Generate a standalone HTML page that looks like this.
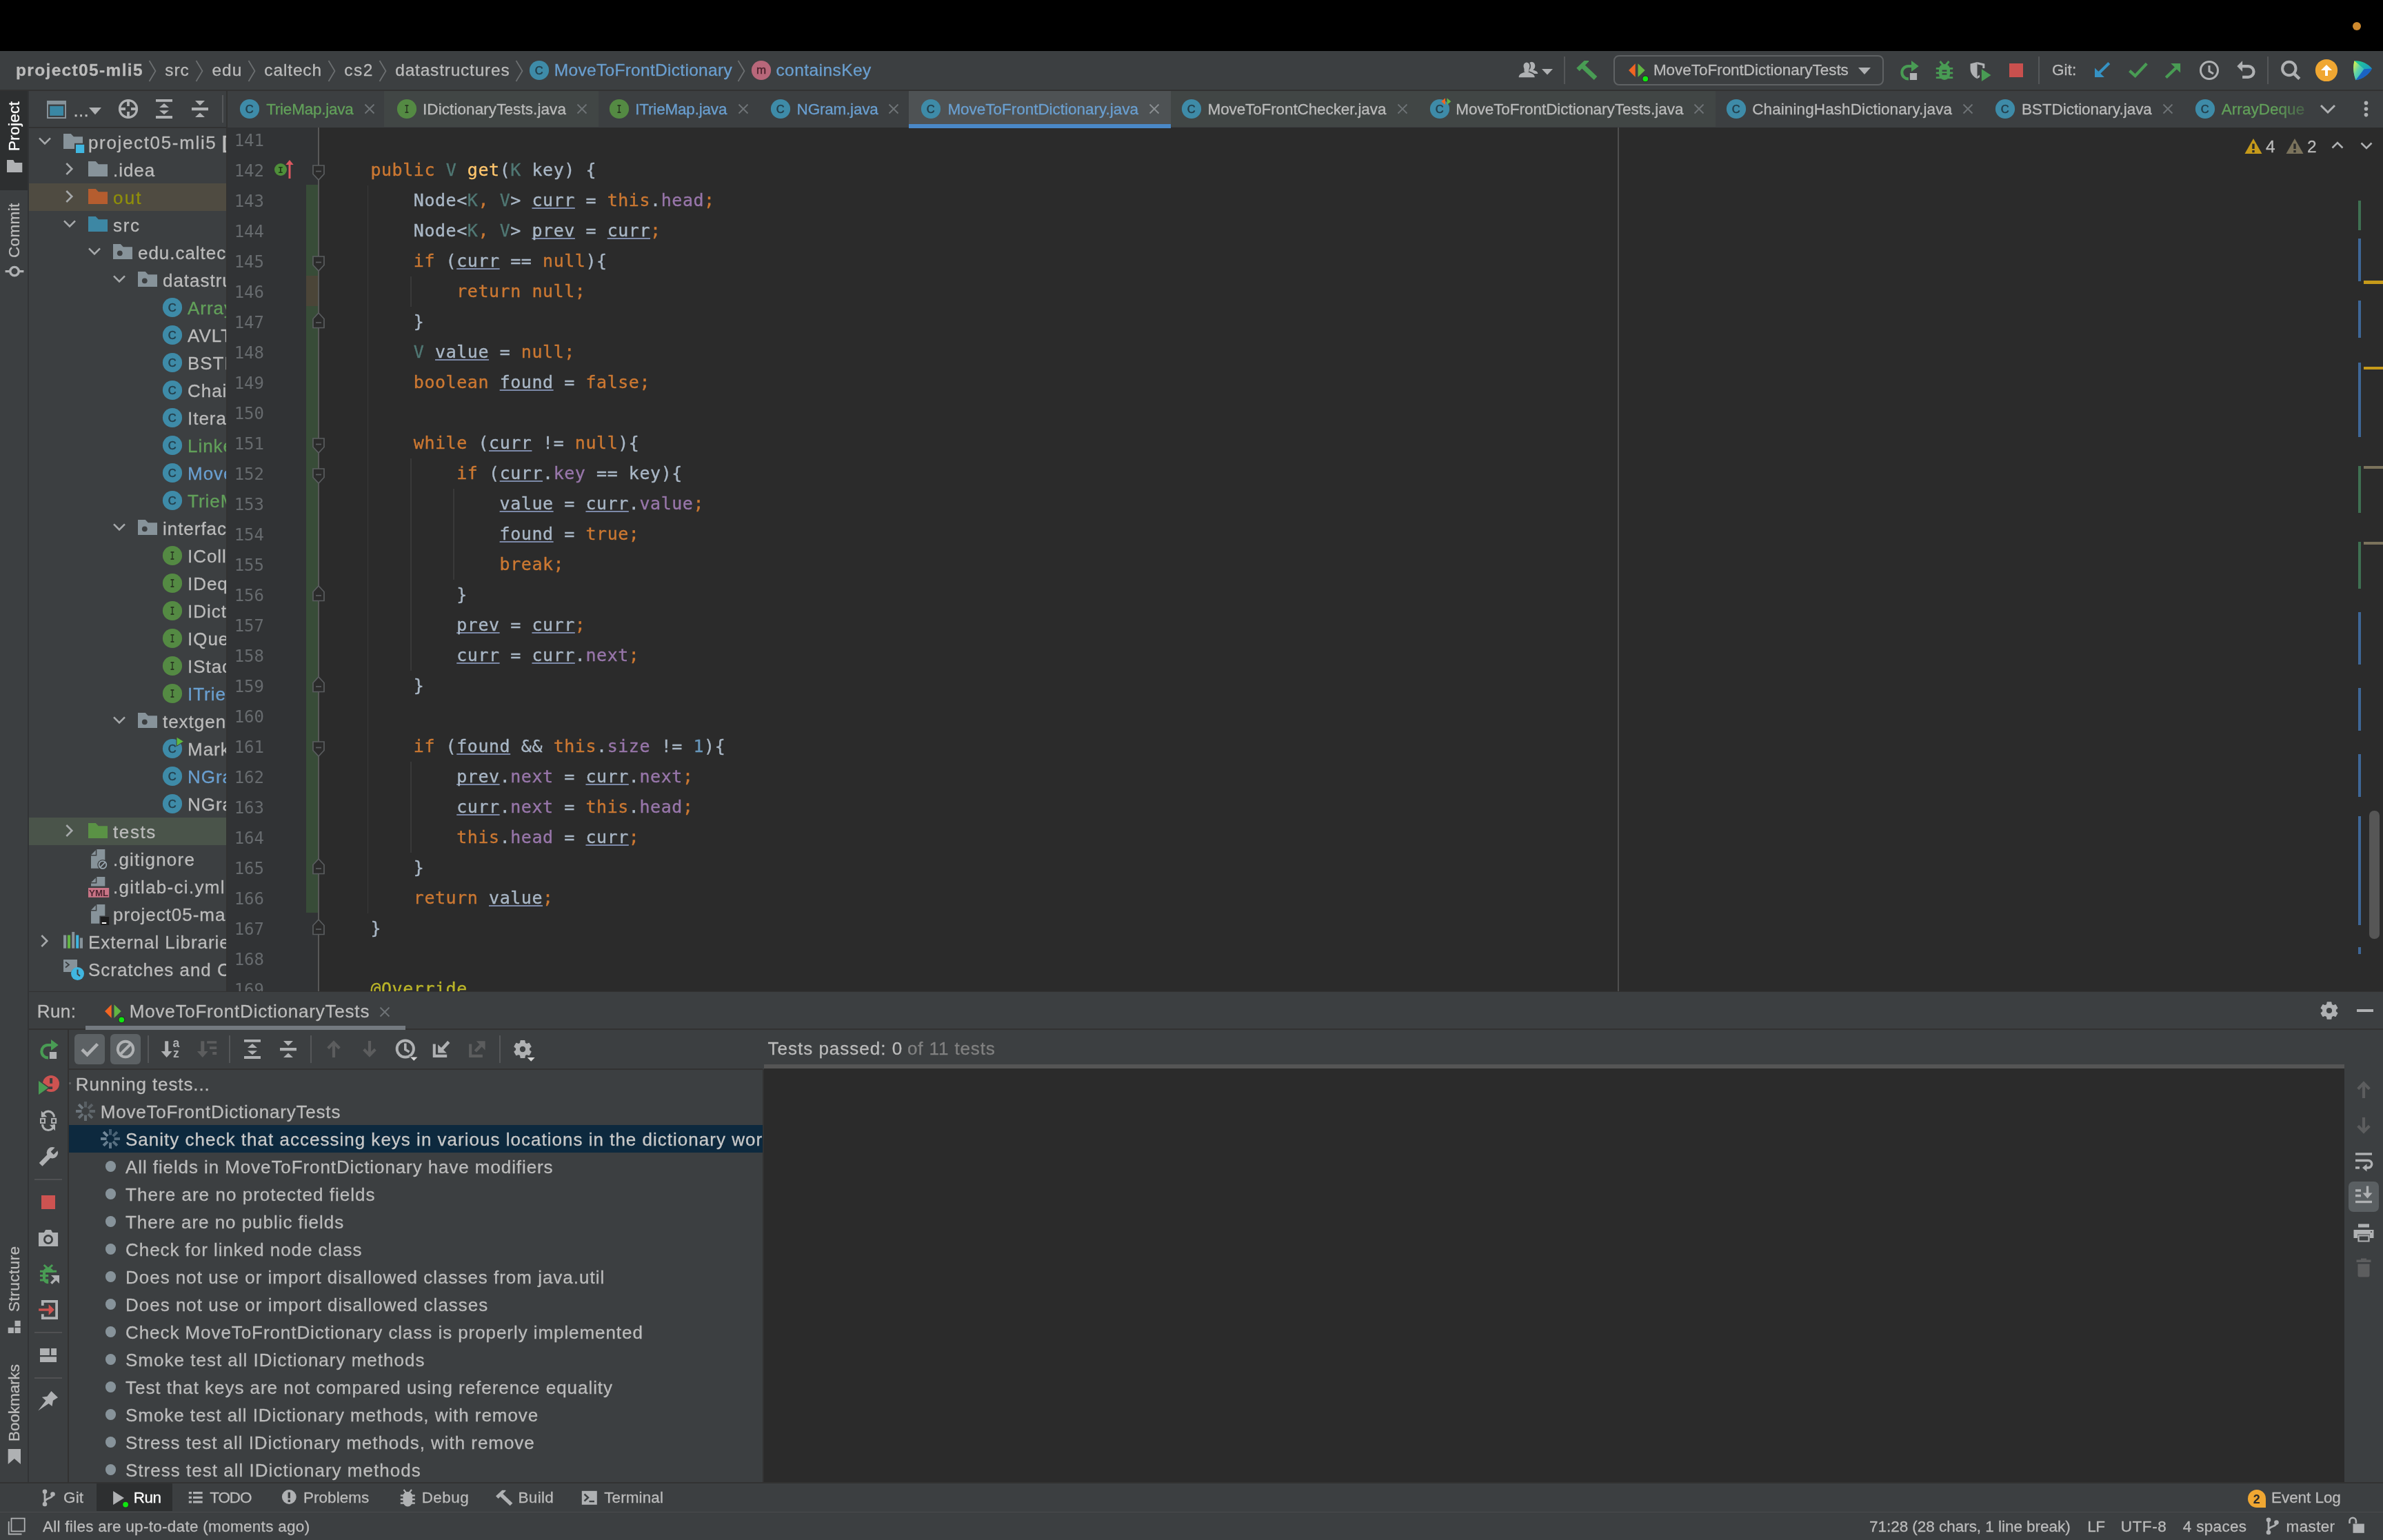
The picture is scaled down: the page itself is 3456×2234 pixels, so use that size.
<!DOCTYPE html>
<html lang="en"><head><meta charset="utf-8"><title>project05-mli5 – MoveToFrontDictionary.java</title>
<style>
html,body{margin:0;padding:0;background:#3c3f41;}
body{will-change:transform;width:3456px;height:2234px;position:relative;overflow:hidden;font-family:"Liberation Sans",sans-serif;font-size:26px;line-height:30px;color:#bbbbbb;}
.a{position:absolute;display:block;}
.t{white-space:nowrap;-webkit-text-stroke:0.3px;}
.clip{overflow:hidden;}
.code{font-family:"DejaVu Sans Mono","Liberation Mono",monospace;font-size:25px;line-height:44px;letter-spacing:0.549px;white-space:pre;color:#a9b7c6;-webkit-text-stroke:0.35px;}
.k{color:#cc7832}.tp{color:#507874}.f{color:#9876aa}.m{color:#ffc66d}.n{color:#6897bb}.an{color:#bbb529}
.u{text-decoration:underline;text-decoration-thickness:1.6px;text-underline-offset:2.3px;text-decoration-color:#7c89a8;text-decoration-skip-ink:none;}
.ln{font-family:"DejaVu Sans Mono","Liberation Mono",monospace;font-size:24px;line-height:46px;color:#676b6e;text-align:right;white-space:pre;}
</style></head>
<body>
<div class="a" style="left:0px;top:0px;width:3456px;height:74px;background:#000000;"></div>
<div class="a" style="left:3412px;top:32px;width:12px;height:12px;background:#cf8a2e;border-radius:50%"></div>
<div class="a" style="left:0px;top:74px;width:3456px;height:56px;background:#3c3f41;"></div>
<div class="a" style="left:0px;top:130px;width:3456px;height:2px;background:#323232;"></div>
<div class="a" style="left:0px;top:132px;width:3456px;height:53px;background:#3c3f41;"></div>
<div class="a" style="left:328px;top:185px;width:3128px;height:1253px;background:#2b2b2b;"></div>
<div class="a" style="left:328px;top:185px;width:135px;height:1253px;background:#313335;"></div>
<div class="a" style="left:0px;top:132px;width:40px;height:2018px;background:#3c3f41;"></div>
<div class="a" style="left:40px;top:132px;width:2px;height:2018px;background:#323436;"></div>
<div class="a" style="left:0px;top:132px;width:40px;height:144px;background:#2d2f30;"></div>
<div class="a" style="left:42px;top:185px;width:286px;height:1253px;background:#3c3f41;"></div>
<div class="a" style="left:42px;top:1438px;width:3414px;height:712px;background:#3c3f41;"></div>
<div class="a" style="left:42px;top:1438px;width:3414px;height:1px;background:#323232;"></div>
<div class="a" style="left:42px;top:1492px;width:3414px;height:2px;background:#323232;"></div>
<div class="a" style="left:0px;top:2150px;width:3456px;height:84px;background:#3c3f41;"></div>
<div class="a" style="left:0px;top:2149.5px;width:3456px;height:2px;background:#323232;"></div>
<div class="a" style="left:0px;top:2192.5px;width:3456px;height:1.5px;background:#4a4c4e;"></div>
<span class="a t" id="t1" style="left:23.0px;top:86.5px;color:#bbbbbb;font-size:24.5px;font-weight:700;letter-spacing:1.345px;">project05-mli5</span>
<svg class="a" style="left:213.5px;top:86px;" width="14" height="34" viewBox="0 0 14 34"><path d="M2.5 2 L11.5 17 L2.5 32" fill="none" stroke="#6c6f71" stroke-width="1.8"/></svg>
<span class="a t" id="t2" style="left:239.3px;top:86.5px;color:#bbbbbb;font-size:24.5px;letter-spacing:0.892px;">src</span>
<svg class="a" style="left:282px;top:86px;" width="14" height="34" viewBox="0 0 14 34"><path d="M2.5 2 L11.5 17 L2.5 32" fill="none" stroke="#6c6f71" stroke-width="1.8"/></svg>
<span class="a t" id="t3" style="left:307.5px;top:86.5px;color:#bbbbbb;font-size:24.5px;letter-spacing:0.992px;">edu</span>
<svg class="a" style="left:358px;top:86px;" width="14" height="34" viewBox="0 0 14 34"><path d="M2.5 2 L11.5 17 L2.5 32" fill="none" stroke="#6c6f71" stroke-width="1.8"/></svg>
<span class="a t" id="t4" style="left:383.3px;top:86.5px;color:#bbbbbb;font-size:24.5px;letter-spacing:0.864px;">caltech</span>
<svg class="a" style="left:474px;top:86px;" width="14" height="34" viewBox="0 0 14 34"><path d="M2.5 2 L11.5 17 L2.5 32" fill="none" stroke="#6c6f71" stroke-width="1.8"/></svg>
<span class="a t" id="t5" style="left:499.3px;top:86.5px;color:#bbbbbb;font-size:24.5px;letter-spacing:1.492px;">cs2</span>
<svg class="a" style="left:547.8px;top:86px;" width="14" height="34" viewBox="0 0 14 34"><path d="M2.5 2 L11.5 17 L2.5 32" fill="none" stroke="#6c6f71" stroke-width="1.8"/></svg>
<span class="a t" id="t6" style="left:573.3px;top:86.5px;color:#bbbbbb;font-size:24.5px;letter-spacing:0.783px;">datastructures</span>
<svg class="a" style="left:745.8px;top:86px;" width="14" height="34" viewBox="0 0 14 34"><path d="M2.5 2 L11.5 17 L2.5 32" fill="none" stroke="#6c6f71" stroke-width="1.8"/></svg>
<svg class="a" style="left:765.6px;top:86px;" width="32" height="32" viewBox="0 0 32 32"><circle cx="16" cy="16" r="14.100" fill="#3e8ba8"/><text x="15.800" y="21.900" text-anchor="middle" font-family="Liberation Sans, sans-serif" font-size="16.500" fill="#24404d" stroke="#24404d" stroke-width="0.500">C</text></svg>
<span class="a t" id="t7" style="left:803.8px;top:86.5px;color:#6a9fd0;font-size:24.5px;letter-spacing:0.299px;">MoveToFrontDictionary</span>
<svg class="a" style="left:1068.3px;top:86px;" width="14" height="34" viewBox="0 0 14 34"><path d="M2.5 2 L11.5 17 L2.5 32" fill="none" stroke="#6c6f71" stroke-width="1.8"/></svg>
<svg class="a" style="left:1087.5px;top:86px;" width="32" height="32" viewBox="0 0 32 32"><circle cx="16" cy="16" r="14.100" fill="#b8677a"/><text x="16" y="21" text-anchor="middle" font-family="Liberation Sans, sans-serif" font-size="17" fill="#4a222c" stroke="#4a222c" stroke-width="0.400">m</text></svg>
<span class="a t" id="t8" style="left:1125.4px;top:86.5px;color:#6a9fd0;font-size:24.5px;letter-spacing:0.448px;">containsKey</span>
<svg class="a" style="left:2200px;top:86px;" width="34" height="32" viewBox="0 0 34 32"><ellipse cx="21.300" cy="9.700" rx="5" ry="6" fill="#afb1b3"/><path d="M18 21 V13 H23.200 L23.400 15.600 C27.500 17 30.300 18 30.300 21z" fill="#afb1b3"/><g stroke="#3c3f41" stroke-width="1.600" fill="#afb1b3"><path d="M1.750 27 C1.750 21 5.500 19.800 11.500 17.600 L11.800 14 H16.200 L16.500 17.600 C22.500 19.800 26.700 21 26.700 27z"/><ellipse cx="14" cy="9.900" rx="5.300" ry="6.200"/></g><path d="M10.500 13 H17.500 V18 H10.500z" fill="#afb1b3"/><rect x="0" y="26.900" width="34" height="3" fill="#3c3f41"/></svg>
<svg class="a" style="left:2236px;top:100px;" width="16" height="9" viewBox="0 0 16 9"><path d="M0 0h16l-8 8.500z" fill="#afb1b3"/></svg>
<div class="a" style="left:2268px;top:82px;width:2px;height:40px;background:#555759;"></div>
<svg class="a" style="left:2284px;top:86px;" width="34" height="32" viewBox="0 0 34 32"><path d="M2.3 12.7 L13.6 2 L20 2 L20 3.300 L6.700 17.300z" fill="#499c54"/><path d="M12 10.500 L30 27.500" stroke="#499c54" stroke-width="6.600" fill="none"/></svg>
<div class="a" style="left:2340px;top:80px;width:388px;height:40px;border:2px solid #5f6264;border-radius:8px;"></div>
<svg class="a" style="left:2362.2px;top:92px;" width="30" height="30" viewBox="0 0 30 30"><path d="M0 10 L9.700 0.300 V19.700z" fill="#f26522"/><path d="M13.500 0.300 L23.700 10 L13.500 19.700z" fill="#62b543"/><circle cx="24.300" cy="22.300" r="5" fill="#2b2b2b"/><circle cx="24.300" cy="22.300" r="3.900" fill="#0fe60f"/></svg>
<span class="a t" id="t9" style="left:2397.9px;top:87.2px;color:#bbbbbb;font-size:22.5px;letter-spacing:-0.035px;">MoveToFrontDictionaryTests</span>
<svg class="a" style="left:2695px;top:98px;" width="18" height="11" viewBox="0 0 18 11"><path d="M0 0h18l-9 10z" fill="#afb1b3"/></svg>
<svg class="a" style="left:2753px;top:85.7px;" width="32" height="32" viewBox="0 0 32 32"><path d="M19.500 10 H14.200 A9.200 9.200 0 1 0 14.900 28.400" fill="none" stroke="#499c54" stroke-width="4.100"/><path d="M19 2.100 V17.900 L29.700 10z" fill="#499c54"/><rect x="16.900" y="20" width="10.200" height="10" fill="#afb1b3"/></svg>
<svg class="a" style="left:2804px;top:86px;" width="32" height="32" viewBox="0 0 32 32"><path d="M9.500 3 L14.500 9 M22.500 3 L17.500 9" stroke="#499c54" stroke-width="3" fill="none"/><path d="M8 14 a8 7 0 0 1 16 0 v7.500 a8 8.500 0 0 1 -16 0z" fill="#499c54"/><path d="M3.800 13.400 H28.200 M3.800 19.900 H28.200 M3.800 26.600 H28.200" stroke="#499c54" stroke-width="2.800"/><path d="M12.600 16.600 H19.400 M12.600 21.400 H19.400" stroke="#3c3f41" stroke-width="2.200"/></svg>
<svg class="a" style="left:2856px;top:86px;" width="34" height="34" viewBox="0 0 34 34"><path d="M1.500 6.500 L11.500 4 V28.300 C5 25 1.500 20 1.500 13z" fill="#afb1b3"/><path d="M11.500 4 L22.300 6.500 V13 h-3 V9 L11.500 7.200z" fill="#afb1b3"/><path d="M11.500 28.300 L15 26 V22.500 L11.500 25z" fill="#afb1b3"/><path d="M17.900 14.200 V32 L31.500 23z" fill="#499c54"/></svg>
<div class="a" style="left:2914px;top:92px;width:20px;height:20px;background:#c9504e;"></div>
<div class="a" style="left:2956px;top:82px;width:2px;height:40px;background:#555759;"></div>
<span class="a t" id="t10" style="left:2976.0px;top:87.2px;color:#bbbbbb;font-size:22.5px;letter-spacing:0.044px;">Git:</span>
<svg class="a" style="left:3036px;top:86px;" width="32" height="32" viewBox="0 0 32 32"><path d="M2 12.500 V26 H15.900z" fill="#3592c4"/><path d="M8 20 L22.800 5.600" stroke="#3592c4" stroke-width="4.200"/></svg>
<svg class="a" style="left:3084px;top:86px;" width="32" height="32" viewBox="0 0 32 32"><path d="M4.500 16.600 L12.600 24 L29.300 6.300" stroke="#499c54" stroke-width="4.200" fill="none"/></svg>
<svg class="a" style="left:3136px;top:86px;" width="32" height="32" viewBox="0 0 32 32"><path d="M12.200 6 H26.100 V19.500z" fill="#499c54"/><path d="M5.300 26.400 L20.400 11.900" stroke="#499c54" stroke-width="4.200"/></svg>
<svg class="a" style="left:3188.1px;top:86px;" width="32" height="32" viewBox="0 0 32 32"><circle cx="16" cy="16" r="12.500" fill="none" stroke="#afb1b3" stroke-width="3"/><path d="M16 9 V17.300 L22 21" fill="none" stroke="#afb1b3" stroke-width="3"/></svg>
<svg class="a" style="left:3242px;top:86px;" width="32" height="32" viewBox="0 0 32 32"><path d="M2.300 10 L10.100 2.200 V17.900z" fill="#afb1b3"/><path d="M10 10.200 H18.700 A7.800 7.800 0 0 1 18.700 25.900 H10.100" fill="none" stroke="#afb1b3" stroke-width="4.200"/></svg>
<div class="a" style="left:3288px;top:82px;width:2px;height:40px;background:#555759;"></div>
<svg class="a" style="left:3304px;top:84px;" width="34" height="34" viewBox="0 0 34 34"><circle cx="15.800" cy="15.500" r="9.700" fill="none" stroke="#afb1b3" stroke-width="4"/><path d="M22.200 22.200 L30.800 30.300" stroke="#afb1b3" stroke-width="4.600"/></svg>
<svg class="a" style="left:3357px;top:85px;" width="34" height="34" viewBox="0 0 34 34"><circle cx="17" cy="17" r="16.100" fill="#f0a732"/><path d="M9 17.100 L17 8.900 L25.100 17.100 H19 V25 H15 V17.100z" fill="#ffffff"/></svg>
<svg class="a" style="left:3410px;top:86px;" width="32" height="32" viewBox="0 0 32 32"><defs><linearGradient id="lg1" x1="0" y1="0" x2="1" y2="1"><stop offset="0" stop-color="#f5f53a"/><stop offset=".45" stop-color="#5fd3a8"/><stop offset="1" stop-color="#1aa6e0"/></linearGradient><linearGradient id="lg2" x1="0" y1="0" x2="1" y2="1"><stop offset="0" stop-color="#21d789"/><stop offset="1" stop-color="#1a7ee0"/></linearGradient></defs><path d="M4.500 2.300 C14 1.500 24 6 30 13.500 C26 22 16 29 6.500 30.200 C2.500 20 2.500 10 4.500 2.300z" fill="url(#lg2)"/><path d="M4.500 2.300 C9 6 15 11 18.500 14.300 C15 19 10 26 6.500 30.200 C2.500 20 2.500 10 4.500 2.300z" fill="url(#lg1)"/><path d="M18.500 14.300 L30 13.500 C26 22 16 29 6.500 30.200 C10 26 15 19 18.500 14.300z" fill="#1a4fc4" opacity=".75"/></svg>
<div class="a" style="left:42px;top:184px;width:286px;height:2px;background:#323232;"></div>
<div class="a" style="left:328px;top:132px;width:2px;height:1306px;background:#323232;"></div>
<svg class="a" style="left:68px;top:146px;" width="28" height="26" viewBox="0 0 28 26"><path d="M0 0h28v26h-28z M2 5.500 v18.500 h24 v-18.500z" fill="#87939a" fill-rule="evenodd"/><rect x="4.200" y="7.900" width="19.800" height="13.900" fill="#3a87a4"/></svg>
<span class="a t" id="t11" style="left:106.5px;top:144.5px;color:#bbbbbb;font-size:26px;letter-spacing:0.250px;">...</span>
<svg class="a" style="left:129px;top:156px;" width="18" height="11" viewBox="0 0 18 11"><path d="M0 0h18l-9 10.200z" fill="#afb1b3"/></svg>
<svg class="a" style="left:170px;top:142px;" width="32" height="32" viewBox="0 0 32 32"><circle cx="16" cy="16" r="12.400" fill="none" stroke="#afb1b3" stroke-width="3.400"/><path d="M16 2.500 V12 M16 20 V29.500 M2.500 16 H12 M20 16 H29.500" stroke="#afb1b3" stroke-width="3.800"/></svg>
<svg class="a" style="left:226px;top:144px;" width="24" height="28" viewBox="0 0 24 28"><path d="M0 0h24v3.800h-24z M0 24h24v3.900h-24z M12 6 L19 12 H5z M5 16.200 H19 L12 22z" fill="#afb1b3"/></svg>
<svg class="a" style="left:278px;top:144px;" width="24" height="28" viewBox="0 0 24 28"><path d="M0 12.100h24v4.100h-24z M5 2 H19 L12 8.900z M12 19.400 L19 26 H5z" fill="#afb1b3"/></svg>
<div class="a" style="left:322px;top:138px;width:2px;height:40px;background:#555759;"></div>
<div class="a" style="left:557px;top:132px;width:311px;height:52px;background:#414645;"></div>
<div class="a" style="left:1318px;top:132px;width:380px;height:53px;background:#4e5254;"></div>
<div class="a" style="left:1318px;top:180px;width:380px;height:6px;background:#4a88c7;"></div>
<div class="a" style="left:1698px;top:132px;width:790px;height:52px;background:#414645;"></div>
<svg class="a" style="left:346px;top:142px;" width="32" height="32" viewBox="0 0 32 32"><circle cx="16" cy="16" r="14.100" fill="#3e8ba8"/><text x="15.800" y="21.900" text-anchor="middle" font-family="Liberation Sans, sans-serif" font-size="16.500" fill="#24404d" stroke="#24404d" stroke-width="0.500">C</text></svg>
<span class="a t" id="t12" style="left:386.2px;top:143.5px;color:#62a05a;font-size:22.5px;letter-spacing:-0.243px;">TrieMap.java</span>
<svg class="a" style="left:527px;top:149px;" width="18" height="18" viewBox="0 0 18 18"><path d="M2.500 2.500 L15.500 15.500 M15.500 2.500 L2.500 15.500" stroke="#6e7376" stroke-width="1.900" fill="none"/></svg>
<svg class="a" style="left:574px;top:142px;" width="32" height="32" viewBox="0 0 32 32"><circle cx="16" cy="16" r="14.100" fill="#548a43"/><text x="16" y="22" text-anchor="middle" font-family="Liberation Mono, monospace" font-weight="bold" font-size="18" fill="#2a3a22" textLength="6.400" lengthAdjust="spacingAndGlyphs">I</text></svg>
<span class="a t" id="t13" style="left:613.0px;top:143.5px;color:#bbbbbb;font-size:22.5px;letter-spacing:0.082px;">IDictionaryTests.java</span>
<svg class="a" style="left:835px;top:149px;" width="18" height="18" viewBox="0 0 18 18"><path d="M2.500 2.500 L15.500 15.500 M15.500 2.500 L2.500 15.500" stroke="#6e7376" stroke-width="1.900" fill="none"/></svg>
<svg class="a" style="left:881.8px;top:142px;" width="32" height="32" viewBox="0 0 32 32"><circle cx="16" cy="16" r="14.100" fill="#548a43"/><text x="16" y="22" text-anchor="middle" font-family="Liberation Mono, monospace" font-weight="bold" font-size="18" fill="#2a3a22" textLength="6.400" lengthAdjust="spacingAndGlyphs">I</text></svg>
<span class="a t" id="t14" style="left:921.3px;top:143.5px;color:#6a9fd0;font-size:22.5px;letter-spacing:-0.197px;">ITrieMap.java</span>
<svg class="a" style="left:1068.7px;top:149px;" width="18" height="18" viewBox="0 0 18 18"><path d="M2.500 2.500 L15.500 15.500 M15.500 2.500 L2.500 15.500" stroke="#6e7376" stroke-width="1.900" fill="none"/></svg>
<svg class="a" style="left:1116px;top:142px;" width="32" height="32" viewBox="0 0 32 32"><circle cx="16" cy="16" r="14.100" fill="#3e8ba8"/><text x="15.800" y="21.900" text-anchor="middle" font-family="Liberation Sans, sans-serif" font-size="16.500" fill="#24404d" stroke="#24404d" stroke-width="0.500">C</text></svg>
<span class="a t" id="t15" style="left:1155.6px;top:143.5px;color:#6a9fd0;font-size:22.5px;letter-spacing:-0.208px;">NGram.java</span>
<svg class="a" style="left:1286.9px;top:149px;" width="18" height="18" viewBox="0 0 18 18"><path d="M2.500 2.500 L15.500 15.500 M15.500 2.500 L2.500 15.500" stroke="#6e7376" stroke-width="1.900" fill="none"/></svg>
<svg class="a" style="left:1333.6px;top:142px;" width="32" height="32" viewBox="0 0 32 32"><circle cx="16" cy="16" r="14.100" fill="#3e8ba8"/><text x="15.800" y="21.900" text-anchor="middle" font-family="Liberation Sans, sans-serif" font-size="16.500" fill="#24404d" stroke="#24404d" stroke-width="0.500">C</text></svg>
<span class="a t" id="t16" style="left:1374.4px;top:143.5px;color:#6a9fd0;font-size:22.5px;letter-spacing:-0.027px;">MoveToFrontDictionary.java</span>
<svg class="a" style="left:1665.3px;top:149px;" width="18" height="18" viewBox="0 0 18 18"><path d="M2.500 2.500 L15.500 15.500 M15.500 2.500 L2.500 15.500" stroke="#8a8e91" stroke-width="1.900" fill="none"/></svg>
<svg class="a" style="left:1712px;top:142px;" width="32" height="32" viewBox="0 0 32 32"><circle cx="16" cy="16" r="14.100" fill="#3e8ba8"/><text x="15.800" y="21.900" text-anchor="middle" font-family="Liberation Sans, sans-serif" font-size="16.500" fill="#24404d" stroke="#24404d" stroke-width="0.500">C</text></svg>
<span class="a t" id="t17" style="left:1751.5px;top:143.5px;color:#bbbbbb;font-size:22.5px;letter-spacing:-0.112px;">MoveToFrontChecker.java</span>
<svg class="a" style="left:2024.8px;top:149px;" width="18" height="18" viewBox="0 0 18 18"><path d="M2.500 2.500 L15.500 15.500 M15.500 2.500 L2.500 15.500" stroke="#6e7376" stroke-width="1.900" fill="none"/></svg>
<svg class="a" style="left:2071.5px;top:142px;" width="32" height="32" viewBox="0 0 32 32"><circle cx="16" cy="16" r="14.100" fill="#3e8ba8"/><text x="15.800" y="21.900" text-anchor="middle" font-family="Liberation Sans, sans-serif" font-size="16.500" fill="#24404d" stroke="#24404d" stroke-width="0.500">C</text></svg>
<svg class="a" style="left:2090px;top:140px;" width="20" height="16" viewBox="0 0 20 16"><path d="M0.300 7.200 L6 2.300 V12z" fill="#f26522"/><path d="M8.500 2.300 L14.400 7.200 L8.500 12z" fill="#62b543"/></svg>
<span class="a t" id="t18" style="left:2111.3px;top:143.5px;color:#bbbbbb;font-size:22.5px;letter-spacing:-0.042px;">MoveToFrontDictionaryTests.java</span>
<svg class="a" style="left:2454.8px;top:149px;" width="18" height="18" viewBox="0 0 18 18"><path d="M2.500 2.500 L15.500 15.500 M15.500 2.500 L2.500 15.500" stroke="#6e7376" stroke-width="1.900" fill="none"/></svg>
<svg class="a" style="left:2502.2px;top:142px;" width="32" height="32" viewBox="0 0 32 32"><circle cx="16" cy="16" r="14.100" fill="#3e8ba8"/><text x="15.800" y="21.900" text-anchor="middle" font-family="Liberation Sans, sans-serif" font-size="16.500" fill="#24404d" stroke="#24404d" stroke-width="0.500">C</text></svg>
<span class="a t" id="t19" style="left:2541.2px;top:143.5px;color:#bbbbbb;font-size:22.5px;letter-spacing:0.101px;">ChainingHashDictionary.java</span>
<svg class="a" style="left:2844.6px;top:149px;" width="18" height="18" viewBox="0 0 18 18"><path d="M2.500 2.500 L15.500 15.500 M15.500 2.500 L2.500 15.500" stroke="#6e7376" stroke-width="1.900" fill="none"/></svg>
<svg class="a" style="left:2891.8px;top:142px;" width="32" height="32" viewBox="0 0 32 32"><circle cx="16" cy="16" r="14.100" fill="#3e8ba8"/><text x="15.800" y="21.900" text-anchor="middle" font-family="Liberation Sans, sans-serif" font-size="16.500" fill="#24404d" stroke="#24404d" stroke-width="0.500">C</text></svg>
<span class="a t" id="t20" style="left:2931.9px;top:143.5px;color:#bbbbbb;font-size:22.5px;letter-spacing:-0.039px;">BSTDictionary.java</span>
<svg class="a" style="left:3134.7px;top:149px;" width="18" height="18" viewBox="0 0 18 18"><path d="M2.500 2.500 L15.500 15.500 M15.500 2.500 L2.500 15.500" stroke="#6e7376" stroke-width="1.900" fill="none"/></svg>
<svg class="a" style="left:3181.7px;top:142px;" width="32" height="32" viewBox="0 0 32 32"><circle cx="16" cy="16" r="14.100" fill="#3e8ba8"/><text x="15.800" y="21.900" text-anchor="middle" font-family="Liberation Sans, sans-serif" font-size="16.500" fill="#24404d" stroke="#24404d" stroke-width="0.500">C</text></svg>
<span class="a t" id="t21" style="left:3221.8px;top:143.5px;color:#62a05a;font-size:22.5px;letter-spacing:0.037px;">ArrayDeque</span>
<div class="a" style="left:3300px;top:134px;width:50px;height:48px;background:linear-gradient(90deg,rgba(60,63,65,0),rgba(60,63,65,.75));"></div>
<svg class="a" style="left:3363px;top:149px;" width="26" height="18" viewBox="0 0 26 18"><path d="M3 4 L13 14 L23 4" fill="none" stroke="#afb1b3" stroke-width="3"/></svg>
<svg class="a" style="left:3426px;top:144px;" width="12" height="30" viewBox="0 0 12 30"><circle cx="5.500" cy="5.400" r="2.800" fill="#afb1b3"/><circle cx="5.500" cy="14" r="2.800" fill="#afb1b3"/><circle cx="5.500" cy="22.600" r="2.800" fill="#afb1b3"/></svg>
<div class="a clip" style="left:42px;top:186px;width:286px;height:1252px;">
<svg class="a" style="left:12px;top:12px;" width="22" height="14" viewBox="0 0 22 14"><path d="M3 2.300 L11 10.300 L19 2.300" fill="none" stroke="#a6a9ab" stroke-width="2.600"/></svg>
<svg class="a" style="left:50px;top:8px;" width="32" height="30" viewBox="0 0 32 30"><path d="M0 0 H10.800 L14.800 4.200 H28 V22 H0z" fill="#87939a"/><rect x="16" y="13.800" width="14.500" height="14.500" fill="#3c3f41"/><rect x="18" y="15.800" width="12.200" height="12.200" fill="#40b6e0"/></svg>
<span class="a t" id="t22" style="left:86.0px;top:6.0px;color:#bbbbbb;font-size:26px;letter-spacing:1.654px;">project05-mli5</span>
<span class="a t" id="t23" style="left:280.2px;top:6.0px;color:#bbbbbb;font-size:26px;font-weight:700;letter-spacing:0.968px;">[project05-main]</span>
<svg class="a" style="left:52px;top:48px;" width="14" height="22" viewBox="0 0 14 22"><path d="M2.300 3 L10.300 11 L2.300 19" fill="none" stroke="#a6a9ab" stroke-width="2.600"/></svg>
<svg class="a" style="left:86px;top:48px;" width="32" height="30" viewBox="0 0 32 30"><path d="M0 0 H10.800 L14.800 4.200 H28 V22 H0z" fill="#87939a"/></svg>
<span class="a t" id="t24" style="left:122.0px;top:46.0px;color:#bbbbbb;font-size:26px;letter-spacing:0.950px;">.idea</span>
<div class="a" style="left:0px;top:80px;width:286px;height:40px;background:#4f4b41;"></div>
<svg class="a" style="left:52px;top:88px;" width="14" height="22" viewBox="0 0 14 22"><path d="M2.300 3 L10.300 11 L2.300 19" fill="none" stroke="#a6a9ab" stroke-width="2.600"/></svg>
<svg class="a" style="left:86px;top:88px;" width="32" height="30" viewBox="0 0 32 30"><path d="M0 0 H10.800 L14.800 4.200 H28 V22 H0z" fill="#b55d2f"/></svg>
<span class="a t" id="t25" style="left:122.0px;top:86.0px;color:#908f0a;font-size:26px;letter-spacing:2.200px;">out</span>
<svg class="a" style="left:48px;top:132px;" width="22" height="14" viewBox="0 0 22 14"><path d="M3 2.300 L11 10.300 L19 2.300" fill="none" stroke="#a6a9ab" stroke-width="2.600"/></svg>
<svg class="a" style="left:86px;top:128px;" width="32" height="30" viewBox="0 0 32 30"><path d="M0 0 H10.800 L14.800 4.200 H28 V22 H0z" fill="#3d87a4"/></svg>
<span class="a t" id="t26" style="left:122.0px;top:126.0px;color:#bbbbbb;font-size:26px;letter-spacing:1.700px;">src</span>
<svg class="a" style="left:84px;top:172px;" width="22" height="14" viewBox="0 0 22 14"><path d="M3 2.300 L11 10.300 L19 2.300" fill="none" stroke="#a6a9ab" stroke-width="2.600"/></svg>
<svg class="a" style="left:122px;top:168px;" width="32" height="30" viewBox="0 0 32 30"><path d="M0 0 H10.800 L14.800 4.200 H28 V22 H0z" fill="#87939a"/><circle cx="9.800" cy="13.300" r="3.900" fill="#3c3f41"/></svg>
<span class="a t" id="t27" style="left:158.0px;top:166.0px;color:#bbbbbb;font-size:26px;letter-spacing:0.968px;">edu.caltech.cs2</span>
<svg class="a" style="left:120px;top:212px;" width="22" height="14" viewBox="0 0 22 14"><path d="M3 2.300 L11 10.300 L19 2.300" fill="none" stroke="#a6a9ab" stroke-width="2.600"/></svg>
<svg class="a" style="left:158px;top:208px;" width="32" height="30" viewBox="0 0 32 30"><path d="M0 0 H10.800 L14.800 4.200 H28 V22 H0z" fill="#87939a"/><circle cx="9.800" cy="13.300" r="3.900" fill="#3c3f41"/></svg>
<span class="a t" id="t28" style="left:194.0px;top:206.0px;color:#bbbbbb;font-size:26px;letter-spacing:0.968px;">datastructures</span>
<svg class="a" style="left:192px;top:244px;" width="32" height="32" viewBox="0 0 32 32"><circle cx="16" cy="16" r="14.100" fill="#3e8ba8"/><text x="15.800" y="21.900" text-anchor="middle" font-family="Liberation Sans, sans-serif" font-size="16.500" fill="#24404d" stroke="#24404d" stroke-width="0.500">C</text></svg>
<span class="a t" id="t29" style="left:230.0px;top:246.0px;color:#62a05a;font-size:26px;letter-spacing:0.968px;">ArrayDeque</span>
<svg class="a" style="left:192px;top:284px;" width="32" height="32" viewBox="0 0 32 32"><circle cx="16" cy="16" r="14.100" fill="#3e8ba8"/><text x="15.800" y="21.900" text-anchor="middle" font-family="Liberation Sans, sans-serif" font-size="16.500" fill="#24404d" stroke="#24404d" stroke-width="0.500">C</text></svg>
<span class="a t" id="t30" style="left:230.0px;top:286.0px;color:#bbbbbb;font-size:26px;letter-spacing:0.968px;">AVLTreeDictionary</span>
<svg class="a" style="left:192px;top:324px;" width="32" height="32" viewBox="0 0 32 32"><circle cx="16" cy="16" r="14.100" fill="#3e8ba8"/><text x="15.800" y="21.900" text-anchor="middle" font-family="Liberation Sans, sans-serif" font-size="16.500" fill="#24404d" stroke="#24404d" stroke-width="0.500">C</text></svg>
<span class="a t" id="t31" style="left:230.0px;top:326.0px;color:#bbbbbb;font-size:26px;letter-spacing:0.968px;">BSTDictionary</span>
<svg class="a" style="left:192px;top:364px;" width="32" height="32" viewBox="0 0 32 32"><circle cx="16" cy="16" r="14.100" fill="#3e8ba8"/><text x="15.800" y="21.900" text-anchor="middle" font-family="Liberation Sans, sans-serif" font-size="16.500" fill="#24404d" stroke="#24404d" stroke-width="0.500">C</text></svg>
<span class="a t" id="t32" style="left:230.0px;top:366.0px;color:#bbbbbb;font-size:26px;letter-spacing:0.968px;">ChainingHashDictionary</span>
<svg class="a" style="left:192px;top:404px;" width="32" height="32" viewBox="0 0 32 32"><circle cx="16" cy="16" r="14.100" fill="#3e8ba8"/><text x="15.800" y="21.900" text-anchor="middle" font-family="Liberation Sans, sans-serif" font-size="16.500" fill="#24404d" stroke="#24404d" stroke-width="0.500">C</text></svg>
<span class="a t" id="t33" style="left:230.0px;top:406.0px;color:#bbbbbb;font-size:26px;letter-spacing:0.968px;">IterableString</span>
<svg class="a" style="left:192px;top:444px;" width="32" height="32" viewBox="0 0 32 32"><circle cx="16" cy="16" r="14.100" fill="#3e8ba8"/><text x="15.800" y="21.900" text-anchor="middle" font-family="Liberation Sans, sans-serif" font-size="16.500" fill="#24404d" stroke="#24404d" stroke-width="0.500">C</text></svg>
<span class="a t" id="t34" style="left:230.0px;top:446.0px;color:#62a05a;font-size:26px;letter-spacing:0.968px;">LinkedDeque</span>
<svg class="a" style="left:192px;top:484px;" width="32" height="32" viewBox="0 0 32 32"><circle cx="16" cy="16" r="14.100" fill="#3e8ba8"/><text x="15.800" y="21.900" text-anchor="middle" font-family="Liberation Sans, sans-serif" font-size="16.500" fill="#24404d" stroke="#24404d" stroke-width="0.500">C</text></svg>
<span class="a t" id="t35" style="left:230.0px;top:486.0px;color:#6a9fd0;font-size:26px;letter-spacing:0.968px;">MoveToFrontDictionary</span>
<svg class="a" style="left:192px;top:524px;" width="32" height="32" viewBox="0 0 32 32"><circle cx="16" cy="16" r="14.100" fill="#3e8ba8"/><text x="15.800" y="21.900" text-anchor="middle" font-family="Liberation Sans, sans-serif" font-size="16.500" fill="#24404d" stroke="#24404d" stroke-width="0.500">C</text></svg>
<span class="a t" id="t36" style="left:230.0px;top:526.0px;color:#62a05a;font-size:26px;letter-spacing:0.968px;">TrieMap</span>
<svg class="a" style="left:120px;top:572px;" width="22" height="14" viewBox="0 0 22 14"><path d="M3 2.300 L11 10.300 L19 2.300" fill="none" stroke="#a6a9ab" stroke-width="2.600"/></svg>
<svg class="a" style="left:158px;top:568px;" width="32" height="30" viewBox="0 0 32 30"><path d="M0 0 H10.800 L14.800 4.200 H28 V22 H0z" fill="#87939a"/><circle cx="9.800" cy="13.300" r="3.900" fill="#3c3f41"/></svg>
<span class="a t" id="t37" style="left:194.0px;top:566.0px;color:#bbbbbb;font-size:26px;letter-spacing:0.968px;">interfaces</span>
<svg class="a" style="left:192px;top:604px;" width="32" height="32" viewBox="0 0 32 32"><circle cx="16" cy="16" r="14.100" fill="#548a43"/><text x="16" y="22" text-anchor="middle" font-family="Liberation Mono, monospace" font-weight="bold" font-size="18" fill="#2a3a22" textLength="6.400" lengthAdjust="spacingAndGlyphs">I</text></svg>
<span class="a t" id="t38" style="left:230.0px;top:606.0px;color:#bbbbbb;font-size:26px;letter-spacing:0.968px;">ICollection</span>
<svg class="a" style="left:192px;top:644px;" width="32" height="32" viewBox="0 0 32 32"><circle cx="16" cy="16" r="14.100" fill="#548a43"/><text x="16" y="22" text-anchor="middle" font-family="Liberation Mono, monospace" font-weight="bold" font-size="18" fill="#2a3a22" textLength="6.400" lengthAdjust="spacingAndGlyphs">I</text></svg>
<span class="a t" id="t39" style="left:230.0px;top:646.0px;color:#bbbbbb;font-size:26px;letter-spacing:0.968px;">IDeque</span>
<svg class="a" style="left:192px;top:684px;" width="32" height="32" viewBox="0 0 32 32"><circle cx="16" cy="16" r="14.100" fill="#548a43"/><text x="16" y="22" text-anchor="middle" font-family="Liberation Mono, monospace" font-weight="bold" font-size="18" fill="#2a3a22" textLength="6.400" lengthAdjust="spacingAndGlyphs">I</text></svg>
<span class="a t" id="t40" style="left:230.0px;top:686.0px;color:#bbbbbb;font-size:26px;letter-spacing:0.968px;">IDictionary</span>
<svg class="a" style="left:192px;top:724px;" width="32" height="32" viewBox="0 0 32 32"><circle cx="16" cy="16" r="14.100" fill="#548a43"/><text x="16" y="22" text-anchor="middle" font-family="Liberation Mono, monospace" font-weight="bold" font-size="18" fill="#2a3a22" textLength="6.400" lengthAdjust="spacingAndGlyphs">I</text></svg>
<span class="a t" id="t41" style="left:230.0px;top:726.0px;color:#bbbbbb;font-size:26px;letter-spacing:0.968px;">IQueue</span>
<svg class="a" style="left:192px;top:764px;" width="32" height="32" viewBox="0 0 32 32"><circle cx="16" cy="16" r="14.100" fill="#548a43"/><text x="16" y="22" text-anchor="middle" font-family="Liberation Mono, monospace" font-weight="bold" font-size="18" fill="#2a3a22" textLength="6.400" lengthAdjust="spacingAndGlyphs">I</text></svg>
<span class="a t" id="t42" style="left:230.0px;top:766.0px;color:#bbbbbb;font-size:26px;letter-spacing:0.968px;">IStack</span>
<svg class="a" style="left:192px;top:804px;" width="32" height="32" viewBox="0 0 32 32"><circle cx="16" cy="16" r="14.100" fill="#548a43"/><text x="16" y="22" text-anchor="middle" font-family="Liberation Mono, monospace" font-weight="bold" font-size="18" fill="#2a3a22" textLength="6.400" lengthAdjust="spacingAndGlyphs">I</text></svg>
<span class="a t" id="t43" style="left:230.0px;top:806.0px;color:#6a9fd0;font-size:26px;letter-spacing:0.968px;">ITrieMap</span>
<svg class="a" style="left:120px;top:852px;" width="22" height="14" viewBox="0 0 22 14"><path d="M3 2.300 L11 10.300 L19 2.300" fill="none" stroke="#a6a9ab" stroke-width="2.600"/></svg>
<svg class="a" style="left:158px;top:848px;" width="32" height="30" viewBox="0 0 32 30"><path d="M0 0 H10.800 L14.800 4.200 H28 V22 H0z" fill="#87939a"/><circle cx="9.800" cy="13.300" r="3.900" fill="#3c3f41"/></svg>
<span class="a t" id="t44" style="left:194.0px;top:846.0px;color:#bbbbbb;font-size:26px;letter-spacing:0.968px;">textgen</span>
<svg class="a" style="left:192px;top:884px;" width="32" height="32" viewBox="0 0 32 32"><circle cx="16" cy="16" r="14.100" fill="#3e8ba8"/><text x="15.800" y="21.900" text-anchor="middle" font-family="Liberation Sans, sans-serif" font-size="16.500" fill="#24404d" stroke="#24404d" stroke-width="0.500">C</text></svg>
<svg class="a" style="left:212px;top:882px;" width="14" height="16" viewBox="0 0 14 16"><path d="M2 1 L12.500 7.500 L2 14.500z" fill="#5fb83f" stroke="#3c3f41" stroke-width="1"/></svg>
<span class="a t" id="t45" style="left:230.0px;top:886.0px;color:#bbbbbb;font-size:26px;letter-spacing:0.968px;">MarkovTextGenerator</span>
<svg class="a" style="left:192px;top:924px;" width="32" height="32" viewBox="0 0 32 32"><circle cx="16" cy="16" r="14.100" fill="#3e8ba8"/><text x="15.800" y="21.900" text-anchor="middle" font-family="Liberation Sans, sans-serif" font-size="16.500" fill="#24404d" stroke="#24404d" stroke-width="0.500">C</text></svg>
<span class="a t" id="t46" style="left:230.0px;top:926.0px;color:#6a9fd0;font-size:26px;letter-spacing:0.968px;">NGram</span>
<svg class="a" style="left:192px;top:964px;" width="32" height="32" viewBox="0 0 32 32"><circle cx="16" cy="16" r="14.100" fill="#3e8ba8"/><text x="15.800" y="21.900" text-anchor="middle" font-family="Liberation Sans, sans-serif" font-size="16.500" fill="#24404d" stroke="#24404d" stroke-width="0.500">C</text></svg>
<span class="a t" id="t47" style="left:230.0px;top:966.0px;color:#bbbbbb;font-size:26px;letter-spacing:0.968px;">NGramMap</span>
<div class="a" style="left:0px;top:1000px;width:286px;height:40px;background:#4a544a;"></div>
<svg class="a" style="left:52px;top:1008px;" width="14" height="22" viewBox="0 0 14 22"><path d="M2.300 3 L10.300 11 L2.300 19" fill="none" stroke="#a6a9ab" stroke-width="2.600"/></svg>
<svg class="a" style="left:86px;top:1008px;" width="32" height="30" viewBox="0 0 32 30"><path d="M0 0 H10.800 L14.800 4.200 H28 V22 H0z" fill="#5a9245"/></svg>
<span class="a t" id="t48" style="left:122.0px;top:1006.0px;color:#bbbbbb;font-size:26px;letter-spacing:1.600px;">tests</span>
<svg class="a" style="left:90px;top:1046px;" width="30" height="32" viewBox="0 0 30 32"><path d="M8.300 0 H20.300 V27.800 H0 V9.500 H8.300z" fill="#87939a"/><path d="M6.800 1.300 V8 H0.200z" fill="#87939a"/><circle cx="16.900" cy="22.500" r="7.600" fill="#3c3f41"/><circle cx="16.900" cy="22.500" r="5.400" fill="none" stroke="#9aa7b0" stroke-width="1.800"/><path d="M13.100 26.300 L20.700 18.700" stroke="#9aa7b0" stroke-width="1.800"/></svg>
<span class="a t" id="t49" style="left:122.0px;top:1046.0px;color:#bbbbbb;font-size:26px;letter-spacing:1.211px;">.gitignore</span>
<svg class="a" style="left:86px;top:1086px;" width="32" height="32" viewBox="0 0 32 32"><path d="M12.300 0.100 H24.300 V13.600 H4 V9.600 H12.300z" fill="#87939a"/><path d="M10.800 1.400 V8.100 H4.200z" fill="#87939a"/><rect x="0" y="16" width="30.200" height="13.800" fill="#c97486"/><text x="15.100" y="28" text-anchor="middle" font-family="Liberation Sans, sans-serif" font-weight="bold" font-size="13" fill="#4a2530" textLength="28" lengthAdjust="spacingAndGlyphs">YML</text></svg>
<span class="a t" id="t50" style="left:122.0px;top:1086.0px;color:#bbbbbb;font-size:26px;letter-spacing:1.308px;">.gitlab-ci.yml</span>
<svg class="a" style="left:90px;top:1126px;" width="30" height="32" viewBox="0 0 30 32"><path d="M8.300 0 H20.300 V27.800 H0 V9.500 H8.300z" fill="#87939a"/><path d="M6.800 1.300 V8 H0.200z" fill="#87939a"/><rect x="12.300" y="16.500" width="15.400" height="15" fill="#3c3f41"/><rect x="13.800" y="18" width="12.400" height="12" fill="#1d1d1d"/><rect x="15.800" y="26" width="6.400" height="2" fill="#ffffff"/></svg>
<span class="a t" id="t51" style="left:122.0px;top:1126.0px;color:#bbbbbb;font-size:26px;letter-spacing:0.968px;">project05-main.iml</span>
<svg class="a" style="left:16px;top:1168px;" width="14" height="22" viewBox="0 0 14 22"><path d="M2.300 3 L10.300 11 L2.300 19" fill="none" stroke="#a6a9ab" stroke-width="2.600"/></svg>
<svg class="a" style="left:50px;top:1165px;" width="30" height="28" viewBox="0 0 30 28"><rect x="0" y="5.500" width="4.200" height="19.200" fill="#87939a"/><rect x="5.900" y="5.500" width="4.200" height="19.200" fill="#62b543"/><rect x="12.200" y="0.900" width="4" height="23.800" fill="#87939a"/><rect x="18.200" y="5.500" width="4" height="19.200" fill="#40b6e0"/><rect x="23.800" y="9.500" width="4.200" height="15.200" fill="#87939a"/></svg>
<span class="a t" id="t52" style="left:86.0px;top:1166.0px;color:#bbbbbb;font-size:26px;letter-spacing:0.968px;">External Libraries</span>
<svg class="a" style="left:50px;top:1205.3px;" width="32" height="32" viewBox="0 0 32 32"><path d="M0 1 H20 V13 A10 10 0 0 0 11 19 H0z" fill="#87939a"/><path d="M3 4.500 L8 8.500 L3 12.500" fill="none" stroke="#3c3f41" stroke-width="1.800"/><circle cx="20.500" cy="21.500" r="9.500" fill="#40b6e0"/><path d="M20.500 15.500 V22 L24 25" fill="none" stroke="#3c3f41" stroke-width="2"/></svg>
<span class="a t" id="t53" style="left:86.0px;top:1206.0px;color:#bbbbbb;font-size:26px;letter-spacing:0.968px;">Scratches and Consoles</span>
</div>
<span class="a t" id="t54" style="left:5.8px;top:219.3px;color:#ffffff;font-size:22.5px;letter-spacing:0.305px;transform-origin:0 0;transform:rotate(-90deg);">Project</span>
<svg class="a" style="left:10px;top:232px;" width="24" height="20" viewBox="0 0 24 20"><path d="M0 0 H9.300 L11.400 4 H22.300 V18 H0z" fill="#afb1b3"/></svg>
<span class="a t" id="t55" style="left:6.2px;top:374.4px;color:#bbbbbb;font-size:22.5px;letter-spacing:0.346px;transform-origin:0 0;transform:rotate(-90deg);">Commit</span>
<svg class="a" style="left:7px;top:380px;" width="28" height="28" viewBox="0 0 28 28"><circle cx="14" cy="13.600" r="6.200" fill="none" stroke="#afb1b3" stroke-width="3.400"/><path d="M0.600 13.600 H7 M21 13.600 H27.400" stroke="#afb1b3" stroke-width="3.400"/></svg>
<span class="a t" id="t56" style="left:6.2px;top:1903.4px;color:#bbbbbb;font-size:22.5px;letter-spacing:0.466px;transform-origin:0 0;transform:rotate(-90deg);">Structure</span>
<svg class="a" style="left:11px;top:1915px;" width="20" height="20" viewBox="0 0 20 20"><rect x="10.500" y="0.800" width="8.200" height="8.200" fill="#afb1b3"/><rect x="0.700" y="10.800" width="8.200" height="8.200" fill="#afb1b3"/><rect x="10.500" y="10.800" width="8.200" height="8.200" fill="#afb1b3"/></svg>
<span class="a t" id="t57" style="left:6.2px;top:2091.4px;color:#bbbbbb;font-size:22.5px;letter-spacing:-0.059px;transform-origin:0 0;transform:rotate(-90deg);">Bookmarks</span>
<svg class="a" style="left:11px;top:2101px;" width="20" height="24" viewBox="0 0 20 24"><path d="M0.700 1 H19 V23 L9.850 15 L0.700 23z" fill="#afb1b3"/></svg>
<div class="a clip" style="left:328px;top:185px;width:3128px;height:1253px;">
<div class="a" style="left:116px;top:83px;width:17px;height:132px;background:#384c38;"></div>
<div class="a" style="left:116px;top:215px;width:17px;height:44px;background:#4b4538;"></div>
<div class="a" style="left:116px;top:259px;width:17px;height:880px;background:#384c38;"></div>
<div class="a" style="left:133.3px;top:0px;width:2px;height:1253px;background:#595959;"></div>
<div class="a" style="left:2018px;top:0px;width:1.5px;height:1253px;background:#4f4f4f;"></div>
<div class="a" style="left:204.5px;top:84px;width:1.5px;height:1056px;background:#393939;"></div>
<div class="a" style="left:267px;top:216px;width:1.5px;height:44px;background:#393939;"></div>
<div class="a" style="left:267px;top:480px;width:1.5px;height:308px;background:#393939;"></div>
<div class="a" style="left:267px;top:920px;width:1.5px;height:132px;background:#393939;"></div>
<div class="a" style="left:329.29999999999995px;top:524px;width:1.5px;height:132px;background:#393939;"></div>
<svg class="a" style="left:125.30000000000001px;top:53.5px;" width="18" height="24" viewBox="0 0 18 24"><path d="M1 1 H17 V13.500 L9 22 L1 13.500z" fill="#2b2b2b" stroke="#5a5d5f" stroke-width="1.700"/><path d="M5 9.5 H13" stroke="#5a5d5f" stroke-width="1.700"/></svg>
<svg class="a" style="left:125.30000000000001px;top:185.5px;" width="18" height="24" viewBox="0 0 18 24"><path d="M1 1 H17 V13.500 L9 22 L1 13.500z" fill="#2b2b2b" stroke="#5a5d5f" stroke-width="1.700"/><path d="M5 9.5 H13" stroke="#5a5d5f" stroke-width="1.700"/></svg>
<svg class="a" style="left:125.30000000000001px;top:449.5px;" width="18" height="24" viewBox="0 0 18 24"><path d="M1 1 H17 V13.500 L9 22 L1 13.500z" fill="#2b2b2b" stroke="#5a5d5f" stroke-width="1.700"/><path d="M5 9.5 H13" stroke="#5a5d5f" stroke-width="1.700"/></svg>
<svg class="a" style="left:125.30000000000001px;top:493.5px;" width="18" height="24" viewBox="0 0 18 24"><path d="M1 1 H17 V13.500 L9 22 L1 13.500z" fill="#2b2b2b" stroke="#5a5d5f" stroke-width="1.700"/><path d="M5 9.5 H13" stroke="#5a5d5f" stroke-width="1.700"/></svg>
<svg class="a" style="left:125.30000000000001px;top:889.5px;" width="18" height="24" viewBox="0 0 18 24"><path d="M1 1 H17 V13.500 L9 22 L1 13.500z" fill="#2b2b2b" stroke="#5a5d5f" stroke-width="1.700"/><path d="M5 9.5 H13" stroke="#5a5d5f" stroke-width="1.700"/></svg>
<svg class="a" style="left:125.30000000000001px;top:268px;" width="18" height="24" viewBox="0 0 18 24"><path d="M1 22.500 H17 V9.500 L9 1 L1 9.500z" fill="#2b2b2b" stroke="#5a5d5f" stroke-width="1.700"/><path d="M5 15 H13" stroke="#5a5d5f" stroke-width="1.700"/></svg>
<svg class="a" style="left:125.30000000000001px;top:664px;" width="18" height="24" viewBox="0 0 18 24"><path d="M1 22.500 H17 V9.500 L9 1 L1 9.500z" fill="#2b2b2b" stroke="#5a5d5f" stroke-width="1.700"/><path d="M5 15 H13" stroke="#5a5d5f" stroke-width="1.700"/></svg>
<svg class="a" style="left:125.30000000000001px;top:796px;" width="18" height="24" viewBox="0 0 18 24"><path d="M1 22.500 H17 V9.500 L9 1 L1 9.500z" fill="#2b2b2b" stroke="#5a5d5f" stroke-width="1.700"/><path d="M5 15 H13" stroke="#5a5d5f" stroke-width="1.700"/></svg>
<svg class="a" style="left:125.30000000000001px;top:1060px;" width="18" height="24" viewBox="0 0 18 24"><path d="M1 22.500 H17 V9.500 L9 1 L1 9.500z" fill="#2b2b2b" stroke="#5a5d5f" stroke-width="1.700"/><path d="M5 15 H13" stroke="#5a5d5f" stroke-width="1.700"/></svg>
<svg class="a" style="left:125.30000000000001px;top:1148px;" width="18" height="24" viewBox="0 0 18 24"><path d="M1 22.500 H17 V9.500 L9 1 L1 9.500z" fill="#2b2b2b" stroke="#5a5d5f" stroke-width="1.700"/><path d="M5 15 H13" stroke="#5a5d5f" stroke-width="1.700"/></svg>
<svg class="a" style="left:69px;top:50.5px;" width="20" height="20" viewBox="0 0 20 20"><circle cx="10" cy="10" r="9" fill="#4f8f3a"/><text x="10" y="14.500" text-anchor="middle" font-family="Liberation Mono, monospace" font-weight="bold" font-size="13" fill="#1f3a17">I</text></svg>
<svg class="a" style="left:85px;top:46px;" width="14" height="30" viewBox="0 0 14 30"><path d="M7 6 V28" stroke="#db5860" stroke-width="3"/><path d="M1.300 8 L7 1 L12.700 8z" fill="#db5860"/></svg>
<div class="a ln" style="left:2px;top:-4px;width:53px;">141</div>
<div class="a ln" style="left:2px;top:40px;width:53px;">142</div>
<div class="a ln" style="left:2px;top:84px;width:53px;">143</div>
<div class="a ln" style="left:2px;top:128px;width:53px;">144</div>
<div class="a ln" style="left:2px;top:172px;width:53px;">145</div>
<div class="a ln" style="left:2px;top:216px;width:53px;">146</div>
<div class="a ln" style="left:2px;top:260px;width:53px;">147</div>
<div class="a ln" style="left:2px;top:304px;width:53px;">148</div>
<div class="a ln" style="left:2px;top:348px;width:53px;">149</div>
<div class="a ln" style="left:2px;top:392px;width:53px;">150</div>
<div class="a ln" style="left:2px;top:436px;width:53px;">151</div>
<div class="a ln" style="left:2px;top:480px;width:53px;">152</div>
<div class="a ln" style="left:2px;top:524px;width:53px;">153</div>
<div class="a ln" style="left:2px;top:568px;width:53px;">154</div>
<div class="a ln" style="left:2px;top:612px;width:53px;">155</div>
<div class="a ln" style="left:2px;top:656px;width:53px;">156</div>
<div class="a ln" style="left:2px;top:700px;width:53px;">157</div>
<div class="a ln" style="left:2px;top:744px;width:53px;">158</div>
<div class="a ln" style="left:2px;top:788px;width:53px;">159</div>
<div class="a ln" style="left:2px;top:832px;width:53px;">160</div>
<div class="a ln" style="left:2px;top:876px;width:53px;">161</div>
<div class="a ln" style="left:2px;top:920px;width:53px;">162</div>
<div class="a ln" style="left:2px;top:964px;width:53px;">163</div>
<div class="a ln" style="left:2px;top:1008px;width:53px;">164</div>
<div class="a ln" style="left:2px;top:1052px;width:53px;">165</div>
<div class="a ln" style="left:2px;top:1096px;width:53px;">166</div>
<div class="a ln" style="left:2px;top:1140px;width:53px;">167</div>
<div class="a ln" style="left:2px;top:1184px;width:53px;">168</div>
<div class="a ln" style="left:2px;top:1228px;width:53px;">169</div>
<div class="a code" style="left:147px;top:40px;">    <span class="k">public</span> <span class="tp">V</span> <span class="m">get</span>(<span class="tp">K</span> key) {</div>
<div class="a code" style="left:147px;top:84px;">        Node&lt;<span class="tp">K</span><span class="k">,</span> <span class="tp">V</span>&gt; <span class="u">curr</span> = <span class="k">this</span>.<span class="f">head</span><span class="k">;</span></div>
<div class="a code" style="left:147px;top:128px;">        Node&lt;<span class="tp">K</span><span class="k">,</span> <span class="tp">V</span>&gt; <span class="u">prev</span> = <span class="u">curr</span><span class="k">;</span></div>
<div class="a code" style="left:147px;top:172px;">        <span class="k">if</span> (<span class="u">curr</span> == <span class="k">null</span>){</div>
<div class="a code" style="left:147px;top:216px;">            <span class="k">return null;</span></div>
<div class="a code" style="left:147px;top:260px;">        }</div>
<div class="a code" style="left:147px;top:304px;">        <span class="tp">V</span> <span class="u">value</span> = <span class="k">null;</span></div>
<div class="a code" style="left:147px;top:348px;">        <span class="k">boolean</span> <span class="u">found</span> = <span class="k">false;</span></div>
<div class="a code" style="left:147px;top:436px;">        <span class="k">while</span> (<span class="u">curr</span> != <span class="k">null</span>){</div>
<div class="a code" style="left:147px;top:480px;">            <span class="k">if</span> (<span class="u">curr</span>.<span class="f">key</span> == key){</div>
<div class="a code" style="left:147px;top:524px;">                <span class="u">value</span> = <span class="u">curr</span>.<span class="f">value</span><span class="k">;</span></div>
<div class="a code" style="left:147px;top:568px;">                <span class="u">found</span> = <span class="k">true;</span></div>
<div class="a code" style="left:147px;top:612px;">                <span class="k">break;</span></div>
<div class="a code" style="left:147px;top:656px;">            }</div>
<div class="a code" style="left:147px;top:700px;">            <span class="u">prev</span> = <span class="u">curr</span><span class="k">;</span></div>
<div class="a code" style="left:147px;top:744px;">            <span class="u">curr</span> = <span class="u">curr</span>.<span class="f">next</span><span class="k">;</span></div>
<div class="a code" style="left:147px;top:788px;">        }</div>
<div class="a code" style="left:147px;top:876px;">        <span class="k">if</span> (<span class="u">found</span> &amp;&amp; <span class="k">this</span>.<span class="f">size</span> != <span class="n">1</span>){</div>
<div class="a code" style="left:147px;top:920px;">            <span class="u">prev</span>.<span class="f">next</span> = <span class="u">curr</span>.<span class="f">next</span><span class="k">;</span></div>
<div class="a code" style="left:147px;top:964px;">            <span class="u">curr</span>.<span class="f">next</span> = <span class="k">this</span>.<span class="f">head</span><span class="k">;</span></div>
<div class="a code" style="left:147px;top:1008px;">            <span class="k">this</span>.<span class="f">head</span> = <span class="u">curr</span><span class="k">;</span></div>
<div class="a code" style="left:147px;top:1052px;">        }</div>
<div class="a code" style="left:147px;top:1096px;">        <span class="k">return</span> <span class="u">value</span><span class="k">;</span></div>
<div class="a code" style="left:147px;top:1140px;">    }</div>
<div class="a code" style="left:147px;top:1228px;">    <span class="an">@Override</span></div>
</div>
<svg class="a" style="left:3255px;top:199.5px;" width="26" height="24" viewBox="0 0 26 24"><path d="M13 1 L25.500 23 H0.500z" fill="#c69a1a"/><path d="M11.300 8.500 h3.400 v7.500 h-3.400z M11.300 18 h3.400 v3.200 h-3.400z" fill="#2b2b2b"/></svg>
<span class="a t" id="t58" style="left:3285.9px;top:198.0px;color:#bbbbbb;font-size:24.5px;letter-spacing:0.783px;">4</span>
<svg class="a" style="left:3315px;top:199.5px;" width="26" height="24" viewBox="0 0 26 24"><path d="M13 1 L25.500 23 H0.500z" fill="#7b735c"/><path d="M11.300 8.500 h3.400 v7.500 h-3.400z M11.300 18 h3.400 v3.200 h-3.400z" fill="#2b2b2b"/></svg>
<span class="a t" id="t59" style="left:3345.9px;top:198.0px;color:#bbbbbb;font-size:24.5px;letter-spacing:0.783px;">2</span>
<svg class="a" style="left:3380px;top:203px;" width="20" height="14" viewBox="0 0 20 14"><path d="M2.500 11.500 L10 4 L17.500 11.500" fill="none" stroke="#afb1b3" stroke-width="2.600"/></svg>
<svg class="a" style="left:3422px;top:205px;" width="20" height="14" viewBox="0 0 20 14"><path d="M2.500 2.500 L10 10 L17.500 2.500" fill="none" stroke="#afb1b3" stroke-width="2.600"/></svg>
<div class="a" style="left:3420px;top:291.4px;width:4px;height:42.400000000000034px;background:#3f7052;"></div>
<div class="a" style="left:3420px;top:345.5px;width:4px;height:62.39999999999998px;background:#3e6797;"></div>
<div class="a" style="left:3420px;top:436.1px;width:4px;height:54.099999999999966px;background:#3e6797;"></div>
<div class="a" style="left:3420px;top:525.5px;width:4px;height:108.5px;background:#3e6797;"></div>
<div class="a" style="left:3420px;top:676px;width:4px;height:68.20000000000005px;background:#3f7052;"></div>
<div class="a" style="left:3420px;top:786px;width:4px;height:68px;background:#3f7052;"></div>
<div class="a" style="left:3420px;top:887.7px;width:4px;height:76.09999999999991px;background:#3e6797;"></div>
<div class="a" style="left:3420px;top:998px;width:4px;height:62px;background:#3e6797;"></div>
<div class="a" style="left:3420px;top:1094px;width:4px;height:62.299999999999955px;background:#3e6797;"></div>
<div class="a" style="left:3420px;top:1183.8px;width:4px;height:158.4000000000001px;background:#3e6797;"></div>
<div class="a" style="left:3420px;top:1373.8px;width:4px;height:10.400000000000091px;background:#3e6797;"></div>
<div class="a" style="left:3428px;top:407.4px;width:28px;height:4.2px;background:#c69a1a;"></div>
<div class="a" style="left:3428px;top:531.8px;width:28px;height:4.2px;background:#c69a1a;"></div>
<div class="a" style="left:3428px;top:676px;width:28px;height:4.2px;background:#7b735c;"></div>
<div class="a" style="left:3428px;top:786px;width:28px;height:4.2px;background:#7b735c;"></div>
<div class="a" style="left:3436px;top:1176px;width:14.5px;height:186px;background:#565656;border-radius:7px"></div>
<span class="a t" id="t60" style="left:53.7px;top:1451.5px;color:#bbbbbb;font-size:26px;letter-spacing:0.433px;">Run:</span>
<svg class="a" style="left:152px;top:1456.5px;" width="30" height="30" viewBox="0 0 30 30"><path d="M0 10 L9.700 0.300 V19.700z" fill="#f26522"/><path d="M13.500 0.300 L23.700 10 L13.500 19.700z" fill="#62b543"/><circle cx="24.300" cy="22.300" r="5" fill="#2b2b2b"/><circle cx="24.300" cy="22.300" r="3.900" fill="#0fe60f"/></svg>
<span class="a t" id="t61" style="left:187.7px;top:1451.5px;color:#bbbbbb;font-size:26px;letter-spacing:0.788px;">MoveToFrontDictionaryTests</span>
<svg class="a" style="left:549px;top:1459px;" width="18" height="18" viewBox="0 0 18 18"><path d="M2.500 2.500 L15.500 15.500 M15.500 2.500 L2.500 15.500" stroke="#6e7376" stroke-width="1.900" fill="none"/></svg>
<div class="a" style="left:124px;top:1488px;width:464px;height:5.5px;background:#747a80;"></div>
<svg class="a" style="left:3362px;top:1450px;" width="32" height="32" viewBox="-16 -16 32 32"><path d="M3.33 -8.68 L2.79 -12.08 L-2.79 -12.08 L-3.33 -8.68 L-5.85 -7.23 L-9.07 -8.46 L-11.86 -3.63 L-9.19 -1.45 L-9.19 1.45 L-11.86 3.63 L-9.07 8.46 L-5.85 7.23 L-3.33 8.68 L-2.79 12.08 L2.79 12.08 L3.33 8.68 L5.85 7.23 L9.07 8.46 L11.86 3.63 L9.19 1.45 L9.19 -1.45 L11.86 -3.63 L9.07 -8.46 L5.85 -7.23z M4.71 0 A4.71 4.71 0 1 0 -4.71 0 A4.71 4.71 0 1 0 4.71 0z" fill="#afb1b3" fill-rule="evenodd" stroke="#afb1b3" stroke-width="1.200" stroke-linejoin="round"/></svg>
<div class="a" style="left:3417.6px;top:1464px;width:24.6px;height:3.8px;background:#afb1b3;"></div>
<div class="a" style="left:98px;top:1494px;width:2px;height:656px;background:#323232;"></div>
<div class="a" style="left:100px;top:1550px;width:1006px;height:1.5px;background:#323232;"></div>
<div class="a" style="left:1105.5px;top:1551px;width:2px;height:599px;background:#323232;"></div>
<div class="a" style="left:1108px;top:1550px;width:2292px;height:600px;background:#2b2b2b;"></div>
<div class="a" style="left:1108px;top:1544px;width:2292px;height:6px;background:#555555;"></div>
<span class="a t" id="t62" style="left:1113.5px;top:1506.0px;color:#bbbbbb;font-size:26px;letter-spacing:1.000px;">Tests passed: 0</span>
<span class="a t" id="t63" style="left:1316.0px;top:1506.0px;color:#808080;font-size:26px;letter-spacing:0.880px;">of 11 tests</span>
<svg class="a" style="left:55px;top:1506px;" width="32" height="32" viewBox="0 0 32 32"><path d="M19.500 10 H14.200 A9.200 9.200 0 1 0 14.900 28.400" fill="none" stroke="#499c54" stroke-width="4.100"/><path d="M19 2.100 V17.900 L29.700 10z" fill="#499c54"/><rect x="16.900" y="20" width="10.200" height="10" fill="#afb1b3"/></svg>
<div class="a" style="left:108px;top:1500px;width:44px;height:44px;background:#5c6164;border-radius:6px"></div>
<svg class="a" style="left:114px;top:1506px;" width="32" height="32" viewBox="0 0 32 32"><path d="M5 16.500 L12.500 24 L27.500 8.500" fill="none" stroke="#afb1b3" stroke-width="4.600"/></svg>
<div class="a" style="left:160px;top:1500px;width:44px;height:44px;background:#5c6164;border-radius:6px"></div>
<svg class="a" style="left:166px;top:1506px;" width="32" height="32" viewBox="0 0 32 32"><circle cx="16" cy="16" r="11.200" fill="none" stroke="#afb1b3" stroke-width="4"/><path d="M8 24 L24 8" stroke="#afb1b3" stroke-width="4"/></svg>
<div class="a" style="left:214px;top:1502px;width:2px;height:40px;background:#555759;"></div>
<svg class="a" style="left:232px;top:1506px;" width="32" height="32" viewBox="0 0 32 32"><path d="M9.700 4.300 V21" stroke="#afb1b3" stroke-width="5"/><path d="M1.700 19 H17.600 L9.700 28z" fill="#afb1b3"/><text x="23.300" y="12.900" text-anchor="middle" font-family="Liberation Sans, sans-serif" font-weight="bold" font-size="17.500" fill="#afb1b3">a</text><text x="23.300" y="27.600" text-anchor="middle" font-family="Liberation Sans, sans-serif" font-weight="bold" font-size="17.500" fill="#afb1b3">z</text></svg>
<svg class="a" style="left:284px;top:1506px;" width="32" height="32" viewBox="0 0 32 32"><path d="M9.800 4.300 V21" stroke="#5c5d5e" stroke-width="5"/><path d="M1.800 19 H17.700 L9.800 28z" fill="#5c5d5e"/><path d="M16.200 4.300 h14 v3.400 h-14z M20 12.200 h10.200 v3.800 h-10.200z M24.200 20 h6 v4 h-6z" fill="#5c5d5e"/></svg>
<div class="a" style="left:332px;top:1502px;width:2px;height:40px;background:#555759;"></div>
<svg class="a" style="left:354px;top:1508px;" width="24" height="28" viewBox="0 0 24 28"><path d="M0 0h24v3.800h-24z M0 24h24v3.900h-24z M12 6 L19 12 H5z M5 16.200 H19 L12 22z" fill="#afb1b3"/></svg>
<svg class="a" style="left:406px;top:1508px;" width="24" height="28" viewBox="0 0 24 28"><path d="M0 12.100h24v4.100h-24z M5 2 H19 L12 8.900z M12 19.400 L19 26 H5z" fill="#afb1b3"/></svg>
<div class="a" style="left:450px;top:1502px;width:2px;height:40px;background:#555759;"></div>
<svg class="a" style="left:472px;top:1507px;" width="24" height="28" viewBox="0 0 24 28"><path d="M12 5 V27" stroke="#5c5d5e" stroke-width="4.200"/><path d="M3.700 13.700 L12 5.300 L20.300 13.700" fill="none" stroke="#5c5d5e" stroke-width="4.200"/></svg>
<svg class="a" style="left:524px;top:1508px;" width="24" height="28" viewBox="0 0 24 28"><path d="M12 1.900 V23" stroke="#5c5d5e" stroke-width="4.200"/><path d="M3.700 14.300 L12 22.700 L20.300 14.300" fill="none" stroke="#5c5d5e" stroke-width="4.200"/></svg>
<svg class="a" style="left:571.7px;top:1506.3px;" width="36" height="36" viewBox="0 0 36 36"><circle cx="15.800" cy="15.500" r="12.100" fill="none" stroke="#afb1b3" stroke-width="4"/><path d="M15.800 7.500 V16.500 L21.500 20" fill="none" stroke="#afb1b3" stroke-width="3.600"/><path d="M21.500 26.500 H35 L28.250 34z" fill="#3c3f41"/><path d="M23.100 27.500 H33.400 L28.250 32.800z" fill="#d6d6d6"/></svg>
<svg class="a" style="left:626px;top:1506px;" width="32" height="32" viewBox="0 0 32 32"><path d="M3.800 8.400 V25.900 H22.200" fill="none" stroke="#afb1b3" stroke-width="4.100"/><path d="M15 16 L24.800 5.400" stroke="#afb1b3" stroke-width="4.500"/><path d="M9.200 9.200 V21.500 H21.700z" fill="#afb1b3"/></svg>
<svg class="a" style="left:678px;top:1506px;" width="32" height="32" viewBox="0 0 32 32"><path d="M4.200 8.400 V25.900 H21.900" fill="none" stroke="#5c5d5e" stroke-width="4.100"/><path d="M11.300 19 L20 10" stroke="#5c5d5e" stroke-width="4.500"/><path d="M12.800 4.300 H25.600 V17.500z" fill="#5c5d5e"/></svg>
<div class="a" style="left:724px;top:1502px;width:2px;height:40px;background:#555759;"></div>
<svg class="a" style="left:742px;top:1506px;" width="32" height="32" viewBox="-16 -16 32 32"><path d="M3.39 -8.82 L2.83 -12.28 L-2.83 -12.28 L-3.39 -8.82 L-5.95 -7.34 L-9.22 -8.59 L-12.05 -3.68 L-9.33 -1.48 L-9.33 1.48 L-12.05 3.68 L-9.22 8.59 L-5.95 7.34 L-3.39 8.82 L-2.83 12.28 L2.83 12.28 L3.39 8.82 L5.95 7.34 L9.22 8.59 L12.05 3.68 L9.33 1.48 L9.33 -1.48 L12.05 -3.68 L9.22 -8.59 L5.95 -7.34z M4.79 0 A4.79 4.79 0 1 0 -4.79 0 A4.79 4.79 0 1 0 4.79 0z" fill="#afb1b3" fill-rule="evenodd" stroke="#afb1b3" stroke-width="1.200" stroke-linejoin="round"/></svg>
<svg class="a" style="left:762px;top:1531px;" width="16" height="10" viewBox="0 0 16 10"><path d="M0.500 2 H15.500 L8 10z" fill="#3c3f41"/><path d="M2.700 3 H13.700 L8.200 8.800z" fill="#d6d6d6"/></svg>
<svg class="a" style="left:54px;top:1558px;" width="36" height="32" viewBox="0 0 36 32"><circle cx="20" cy="14" r="12" fill="#cd5351"/><path d="M18.100 6 h4 v7.800 h-4z M16.500 18.200 h5.600 v3.700 h-5.600z" fill="#3c3f41"/><path d="M0.300 7 V32.900 L18.600 20z" fill="#3c3f41"/><path d="M2 10 V29.900 L15.900 20z" fill="#499c54"/></svg>
<svg class="a" style="left:56px;top:1608px;" width="30" height="36" viewBox="0 0 30 36"><path d="M5.550 12.600 A8.450 8.450 0 0 1 22.450 12.600" fill="none" stroke="#afb1b3" stroke-width="3.100"/><path d="M3.900 3.400 V12.200 H12.300z" fill="#afb1b3"/><path d="M22.450 23.100 A8.450 8.450 0 0 1 5.550 23.100" fill="none" stroke="#afb1b3" stroke-width="3.100"/><path d="M24 32.300 V23.700 H15.800z" fill="#afb1b3"/><rect x="3" y="14.900" width="6" height="6.100" fill="none" stroke="#afb1b3" stroke-width="2"/><rect x="19.100" y="14.900" width="6" height="6.100" fill="none" stroke="#afb1b3" stroke-width="2"/></svg>
<svg class="a" style="left:55px;top:1662px;" width="32" height="32" viewBox="0 0 32 32"><path d="M4.100 27.400 L18.500 12.600" stroke="#afb1b3" stroke-width="6.600"/><circle cx="20.900" cy="10.200" r="8.200" fill="#afb1b3"/><path d="M18.600 8.700 L22.800 12.900 L31.500 4.200 L27.300 0z" fill="#3c3f41"/></svg>
<div class="a" style="left:50px;top:1710px;width:40px;height:2px;background:#505153;"></div>
<div class="a" style="left:60px;top:1734px;width:20px;height:20px;background:#cd5351;"></div>
<svg class="a" style="left:55px;top:1782px;" width="30" height="28" viewBox="0 0 30 28"><path d="M1 6 H9 L11.100 2.100 H19 L21.100 6 H29.100 V26 H1z" fill="#afb1b3"/><circle cx="15" cy="16" r="5.600" fill="none" stroke="#3c3f41" stroke-width="2.800"/></svg>
<svg class="a" style="left:56px;top:1832px;" width="32" height="32" viewBox="0 0 32 32"><path d="M7.700 3 L13.900 8.900 L20.100 3" stroke="#499c54" stroke-width="3" fill="none"/><path d="M6 14 a7.900 7.200 0 0 1 15.800 0 v8.500 a7.900 7.700 0 0 1 -15.800 0z" fill="#499c54"/><path d="M2 12.300 H26.100 M2 18.500 H14 M2 25 H14" stroke="#499c54" stroke-width="3.100"/><path d="M14.200 14 H32 V32 H14.200z M10.100 14 H14.300 V17.100 H10.100z M10.100 20.200 H14.300 V23.400 H10.100z" fill="#3c3f41"/><path d="M18.300 29.700 L26.500 21.500" stroke="#afb1b3" stroke-width="3.600"/><path d="M18 18 H30 V29.900z" fill="#afb1b3"/></svg>
<svg class="a" style="left:55px;top:1884px;" width="32" height="32" viewBox="0 0 32 32"><path d="M6.800 9.900 V3.900 H27.100 V28.100 H6.800 V22.200" fill="none" stroke="#afb1b3" stroke-width="3.800"/><path d="M1.100 16 H16" stroke="#cd5351" stroke-width="3.400"/><path d="M15.600 8 L23.900 16 L15.600 24z" fill="#cd5351"/></svg>
<div class="a" style="left:50px;top:1932px;width:40px;height:2px;background:#505153;"></div>
<svg class="a" style="left:57px;top:1955px;" width="26" height="22" viewBox="0 0 26 22"><path d="M1 1.100 h13.800 v9.800 h-13.800z M17.100 1.100 h7.900 v9.800 h-7.900z M1 13.300 h24 v7.600 h-24z" fill="#afb1b3"/></svg>
<div class="a" style="left:50px;top:1998px;width:40px;height:2px;background:#505153;"></div>
<svg class="a" style="left:54px;top:2016px;" width="32" height="32" viewBox="0 0 32 32"><path d="M1.200 30.500 L12.500 15.800 L6.800 10.700 L14.400 9.800 L20.400 1.900 L30 11.300 L22.900 15.800 L21.500 23.900 L16.600 20.100z" fill="#afb1b3"/></svg>
<div class="a clip" style="left:100px;top:1552px;width:1006px;height:598px;">
<span class="a t" id="t64" style="left:9.8px;top:6.0px;color:#bbbbbb;font-size:26px;letter-spacing:0.887px;">Running tests...</span>
<div class="a" style="left:0px;top:17.5px;width:3px;height:3px;background:#5a5d5f;"></div>
<svg class="a" style="left:8px;top:44px;" width="32" height="32" viewBox="-16 -16 32 32"><rect x="-2" y="-14" width="4" height="8.500" fill="#6f787e" opacity="0.55" transform="rotate(0)"/><rect x="-2" y="-14" width="4" height="8.500" fill="#6f787e" opacity="0.61" transform="rotate(45)"/><rect x="-2" y="-14" width="4" height="8.500" fill="#6f787e" opacity="0.68" transform="rotate(90)"/><rect x="-2" y="-14" width="4" height="8.500" fill="#6f787e" opacity="0.74" transform="rotate(135)"/><rect x="-2" y="-14" width="4" height="8.500" fill="#6f787e" opacity="0.81" transform="rotate(180)"/><rect x="-2" y="-14" width="4" height="8.500" fill="#6f787e" opacity="0.87" transform="rotate(225)"/><rect x="-2" y="-14" width="4" height="8.500" fill="#6f787e" opacity="0.94" transform="rotate(270)"/><rect x="-2" y="-14" width="4" height="8.500" fill="#6f787e" opacity="1.00" transform="rotate(315)"/></svg>
<span class="a t" id="t65" style="left:45.7px;top:45.7px;color:#bbbbbb;font-size:26px;letter-spacing:0.788px;">MoveToFrontDictionaryTests</span>
<div class="a" style="left:0px;top:80px;width:1006px;height:40px;background:#0d293e;"></div>
<svg class="a" style="left:44px;top:84px;" width="32" height="32" viewBox="-16 -16 32 32"><rect x="-2" y="-14" width="4" height="8.500" fill="#73899a" opacity="0.55" transform="rotate(0)"/><rect x="-2" y="-14" width="4" height="8.500" fill="#73899a" opacity="0.61" transform="rotate(45)"/><rect x="-2" y="-14" width="4" height="8.500" fill="#73899a" opacity="0.68" transform="rotate(90)"/><rect x="-2" y="-14" width="4" height="8.500" fill="#73899a" opacity="0.74" transform="rotate(135)"/><rect x="-2" y="-14" width="4" height="8.500" fill="#73899a" opacity="0.81" transform="rotate(180)"/><rect x="-2" y="-14" width="4" height="8.500" fill="#73899a" opacity="0.87" transform="rotate(225)"/><rect x="-2" y="-14" width="4" height="8.500" fill="#73899a" opacity="0.94" transform="rotate(270)"/><rect x="-2" y="-14" width="4" height="8.500" fill="#73899a" opacity="1.00" transform="rotate(315)"/></svg>
<span class="a t" id="t66" style="left:82.0px;top:86.0px;color:#c8c8c8;font-size:26px;letter-spacing:1.011px;">Sanity check that accessing keys in various locations in the dictionary works</span>
<div class="a" style="left:52.5px;top:132.29999999999995px;width:15.4px;height:15.4px;background:#87939a;border-radius:50%"></div>
<span class="a t" id="t67" style="left:82.0px;top:126.0px;color:#bbbbbb;font-size:26px;letter-spacing:0.908px;">All fields in MoveToFrontDictionary have modifiers</span>
<div class="a" style="left:52.5px;top:172.29999999999995px;width:15.4px;height:15.4px;background:#87939a;border-radius:50%"></div>
<span class="a t" id="t68" style="left:82.0px;top:166.0px;color:#bbbbbb;font-size:26px;letter-spacing:1.043px;">There are no protected fields</span>
<div class="a" style="left:52.5px;top:212.29999999999995px;width:15.4px;height:15.4px;background:#87939a;border-radius:50%"></div>
<span class="a t" id="t69" style="left:82.0px;top:206.0px;color:#bbbbbb;font-size:26px;letter-spacing:0.968px;">There are no public fields</span>
<div class="a" style="left:52.5px;top:252.29999999999995px;width:15.4px;height:15.4px;background:#87939a;border-radius:50%"></div>
<span class="a t" id="t70" style="left:82.0px;top:246.0px;color:#bbbbbb;font-size:26px;letter-spacing:0.946px;">Check for linked node class</span>
<div class="a" style="left:52.5px;top:292.29999999999995px;width:15.4px;height:15.4px;background:#87939a;border-radius:50%"></div>
<span class="a t" id="t71" style="left:82.0px;top:286.0px;color:#bbbbbb;font-size:26px;letter-spacing:0.982px;">Does not use or import disallowed classes from java.util</span>
<div class="a" style="left:52.5px;top:332.29999999999995px;width:15.4px;height:15.4px;background:#87939a;border-radius:50%"></div>
<span class="a t" id="t72" style="left:82.0px;top:326.0px;color:#bbbbbb;font-size:26px;letter-spacing:0.993px;">Does not use or import disallowed classes</span>
<div class="a" style="left:52.5px;top:372.29999999999995px;width:15.4px;height:15.4px;background:#87939a;border-radius:50%"></div>
<span class="a t" id="t73" style="left:82.0px;top:366.0px;color:#bbbbbb;font-size:26px;letter-spacing:0.927px;">Check MoveToFrontDictionary class is properly implemented</span>
<div class="a" style="left:52.5px;top:412.29999999999995px;width:15.4px;height:15.4px;background:#87939a;border-radius:50%"></div>
<span class="a t" id="t74" style="left:82.0px;top:406.0px;color:#bbbbbb;font-size:26px;letter-spacing:1.006px;">Smoke test all IDictionary methods</span>
<div class="a" style="left:52.5px;top:452.29999999999995px;width:15.4px;height:15.4px;background:#87939a;border-radius:50%"></div>
<span class="a t" id="t75" style="left:82.0px;top:446.0px;color:#bbbbbb;font-size:26px;letter-spacing:0.960px;">Test that keys are not compared using reference equality</span>
<div class="a" style="left:52.5px;top:492.29999999999995px;width:15.4px;height:15.4px;background:#87939a;border-radius:50%"></div>
<span class="a t" id="t76" style="left:82.0px;top:486.0px;color:#bbbbbb;font-size:26px;letter-spacing:0.943px;">Smoke test all IDictionary methods, with remove</span>
<div class="a" style="left:52.5px;top:532.3000000000002px;width:15.4px;height:15.4px;background:#87939a;border-radius:50%"></div>
<span class="a t" id="t77" style="left:82.0px;top:526.0px;color:#bbbbbb;font-size:26px;letter-spacing:0.960px;">Stress test all IDictionary methods, with remove</span>
<div class="a" style="left:52.5px;top:572.3000000000002px;width:15.4px;height:15.4px;background:#87939a;border-radius:50%"></div>
<span class="a t" id="t78" style="left:82.0px;top:566.0px;color:#bbbbbb;font-size:26px;letter-spacing:1.018px;">Stress test all IDictionary methods</span>
</div>
<svg class="a" style="left:3416px;top:1566px;" width="24" height="28" viewBox="0 0 24 28"><path d="M12 5 V27" stroke="#5c5d5e" stroke-width="4.200"/><path d="M3.700 13.700 L12 5.300 L20.300 13.700" fill="none" stroke="#5c5d5e" stroke-width="4.200"/></svg>
<svg class="a" style="left:3416px;top:1619px;" width="24" height="28" viewBox="0 0 24 28"><path d="M12 1.900 V23" stroke="#5c5d5e" stroke-width="4.200"/><path d="M3.700 14.300 L12 22.700 L20.300 14.300" fill="none" stroke="#5c5d5e" stroke-width="4.200"/></svg>
<svg class="a" style="left:3415px;top:1670px;" width="28" height="32" viewBox="0 0 28 32"><path d="M1 4 H25" stroke="#afb1b3" stroke-width="3.400"/><path d="M1 13.500 H19.500 A5.200 5.200 0 0 1 19.500 24 H16" fill="none" stroke="#afb1b3" stroke-width="3.400"/><path d="M17.500 18.500 V29.500 L11 24z" fill="#afb1b3"/><path d="M1 24 H7" stroke="#afb1b3" stroke-width="3.400"/></svg>
<div class="a" style="left:3405.7px;top:1714px;width:44.3px;height:43.5px;background:#5a5f62;border-radius:7px"></div>
<svg class="a" style="left:3415px;top:1720px;" width="28" height="30" viewBox="0 0 28 30"><path d="M1 7 H9 M1 14.500 H9" stroke="#afb1b3" stroke-width="3.400"/><path d="M1 23.500 H25" stroke="#afb1b3" stroke-width="3.400"/><path d="M18.500 0.500 V12" stroke="#afb1b3" stroke-width="3.400"/><path d="M11.500 10.500 H25.500 L18.500 18.500z" fill="#afb1b3"/></svg>
<svg class="a" style="left:3413px;top:1775px;" width="30" height="28" viewBox="0 0 30 28"><path d="M7 0.500 H23 V5.500 H7z" fill="#afb1b3"/><path d="M0.500 9 H29.500 V21 H24 V15.500 H6 V21 H0.500z" fill="#afb1b3"/><path d="M7.500 17.500 H22.500 V25.500 H7.500z" fill="none" stroke="#afb1b3" stroke-width="2.200"/><circle cx="26" cy="12" r="1.100" fill="#3c3f41"/></svg>
<svg class="a" style="left:3417px;top:1825px;" width="22" height="28" viewBox="0 0 22 28"><path d="M7 0.500 H15 V2.500 H21.500 V6 H0.500 V2.500 H7z M2.500 8.500 H19.500 V25 Q19.500 27.500 17 27.500 H5 Q2.500 27.500 2.500 25z" fill="#5c5d5e"/></svg>
<svg class="a" style="left:61px;top:2160px;" width="20.0" height="26.0" viewBox="0 0 20 26"><circle cx="4" cy="3.800" r="3.300" fill="#afb1b3"/><circle cx="4" cy="22" r="3.300" fill="#afb1b3"/><circle cx="15.500" cy="7.500" r="3.300" fill="#afb1b3"/><path d="M4 4 V22 M15.500 8 C15.500 15 4 12 4 19" fill="none" stroke="#afb1b3" stroke-width="2.800"/></svg>
<span class="a t" id="t79" style="left:92.0px;top:2157.5px;color:#bbbbbb;font-size:22.5px;letter-spacing:0.165px;">Git</span>
<div class="a" style="left:140px;top:2152px;width:110px;height:39.5px;background:#2d2f30;"></div>
<svg class="a" style="left:163px;top:2162px;" width="26" height="26" viewBox="0 0 26 26"><path d="M1.100 1.100 V21 L17 11z" fill="#afb1b3"/><circle cx="19.100" cy="20.600" r="5" fill="#2b2b2b"/><circle cx="19.100" cy="20.600" r="3.900" fill="#0fe60f"/></svg>
<span class="a t" id="t80" style="left:193.7px;top:2157.5px;color:#ffffff;font-size:22.5px;letter-spacing:-0.535px;">Run</span>
<svg class="a" style="left:273px;top:2163px;" width="22" height="18" viewBox="0 0 22 18"><path d="M0.800 1.100 h4.200 v3.200 h-4.200z M7 1.100 h13.700 v3.200 h-13.700z M0.800 7.800 h4.200 v3.200 h-4.200z M7 7.800 h13.700 v3.200 h-13.700z M0.800 14.300 h4.200 v3.200 h-4.200z M7 14.300 h13.700 v3.200 h-13.700z" fill="#afb1b3"/></svg>
<span class="a t" id="t81" style="left:304.3px;top:2157.5px;color:#bbbbbb;font-size:22.5px;letter-spacing:-1.156px;">TODO</span>
<svg class="a" style="left:408px;top:2160px;" width="24" height="24" viewBox="0 0 24 24"><circle cx="11.300" cy="11.500" r="10.400" fill="#afb1b3"/><path d="M9.600 4.800 h3.400 v8.700 h-3.400z M9.600 15.500 h3.400 v3.400 h-3.400z" fill="#3c3f41"/></svg>
<span class="a t" id="t82" style="left:439.9px;top:2157.5px;color:#bbbbbb;font-size:22.5px;letter-spacing:0.062px;">Problems</span>
<svg class="a" style="left:580px;top:2160px;" width="24" height="26" viewBox="0 0 24 26"><path d="M5.500 1 L9 5.500 M17 1 L13.500 5.500" stroke="#afb1b3" stroke-width="2.200" fill="none"/><path d="M4.500 10 a6.800 6 0 0 1 13.600 0 v8 a6.800 7.500 0 0 1 -13.600 0z" fill="#afb1b3"/><path d="M0.800 9.500 H21.800 M0.800 15 H21.800 M0.800 20.500 H21.800" stroke="#afb1b3" stroke-width="2.400"/></svg>
<span class="a t" id="t83" style="left:611.7px;top:2157.5px;color:#bbbbbb;font-size:22.5px;letter-spacing:0.433px;">Debug</span>
<svg class="a" style="left:717px;top:2160px;" width="28" height="26" viewBox="0 0 34 32"><path d="M2.300 12.700 L13.600 2 L20 2 L20 3.300 L6.700 17.300z" fill="#afb1b3"/><path d="M12 10.500 L30 27.500" stroke="#afb1b3" stroke-width="6.600" fill="none"/></svg>
<span class="a t" id="t84" style="left:751.5px;top:2157.5px;color:#bbbbbb;font-size:22.5px;letter-spacing:0.308px;">Build</span>
<svg class="a" style="left:843px;top:2162px;" width="24" height="22" viewBox="0 0 24 22"><path d="M0.800 0.800 H22.800 V20.800 H0.800z" fill="#afb1b3"/><path d="M4.500 5.500 L10 10.500 L4.500 15.500" fill="none" stroke="#3c3f41" stroke-width="2.400"/><path d="M11.500 16 H19" stroke="#3c3f41" stroke-width="2.400"/></svg>
<span class="a t" id="t85" style="left:876.2px;top:2157.5px;color:#bbbbbb;font-size:22.5px;letter-spacing:0.104px;">Terminal</span>
<svg class="a" style="left:3260px;top:2161px;" width="26" height="26" viewBox="0 0 26 26"><path d="M13 0 A13 13 0 1 0 13 26 H26 V13 A13 13 0 0 0 13 0z" fill="#f0a732"/><text x="12.800" y="19.800" text-anchor="middle" font-family="Liberation Sans, sans-serif" font-weight="bold" font-size="18" fill="#2b2b2b">2</text></svg>
<span class="a t" id="t86" style="left:3294.0px;top:2157.5px;color:#bbbbbb;font-size:22.5px;letter-spacing:-0.059px;">Event Log</span>
<svg class="a" style="left:11px;top:2201px;" width="26" height="26" viewBox="0 0 26 26"><path d="M5.500 1.700 H24.700 V20.300 H5.500z" fill="none" stroke="#afb1b3" stroke-width="1.800"/><path d="M1.700 6 V24.500 H20.500" fill="none" stroke="#afb1b3" stroke-width="1.800"/></svg>
<span class="a t" id="t87" style="left:61.9px;top:2199.7px;color:#bbbbbb;font-size:22.5px;letter-spacing:0.293px;">All files are up-to-date (moments ago)</span>
<span class="a t" id="t88" style="left:2711.0px;top:2199.7px;color:#bbbbbb;font-size:22.5px;letter-spacing:-0.033px;">71:28 (28 chars, 1 line break)</span>
<span class="a t" id="t89" style="left:3027.2px;top:2199.7px;color:#bbbbbb;font-size:22.5px;letter-spacing:-0.569px;">LF</span>
<span class="a t" id="t90" style="left:3075.7px;top:2199.7px;color:#bbbbbb;font-size:22.5px;letter-spacing:0.583px;">UTF-8</span>
<span class="a t" id="t91" style="left:3165.8px;top:2199.7px;color:#bbbbbb;font-size:22.5px;letter-spacing:0.319px;">4 spaces</span>
<svg class="a" style="left:3286px;top:2200.5px;" width="20.0" height="26.0" viewBox="0 0 20 26"><circle cx="4" cy="3.800" r="3.300" fill="#afb1b3"/><circle cx="4" cy="22" r="3.300" fill="#afb1b3"/><circle cx="15.500" cy="7.500" r="3.300" fill="#afb1b3"/><path d="M4 4 V22 M15.500 8 C15.500 15 4 12 4 19" fill="none" stroke="#afb1b3" stroke-width="2.800"/></svg>
<span class="a t" id="t92" style="left:3315.6px;top:2199.7px;color:#bbbbbb;font-size:22.5px;letter-spacing:0.346px;">master</span>
<svg class="a" style="left:3404px;top:2200px;" width="28" height="28" viewBox="0 0 28 28"><path d="M3.500 10 V6.500 A4.700 4.700 0 0 1 12.900 6.500 V10" fill="none" stroke="#afb1b3" stroke-width="2.600"/><rect x="8.500" y="10.500" width="16.300" height="13.300" fill="#afb1b3"/></svg>
</body></html>
